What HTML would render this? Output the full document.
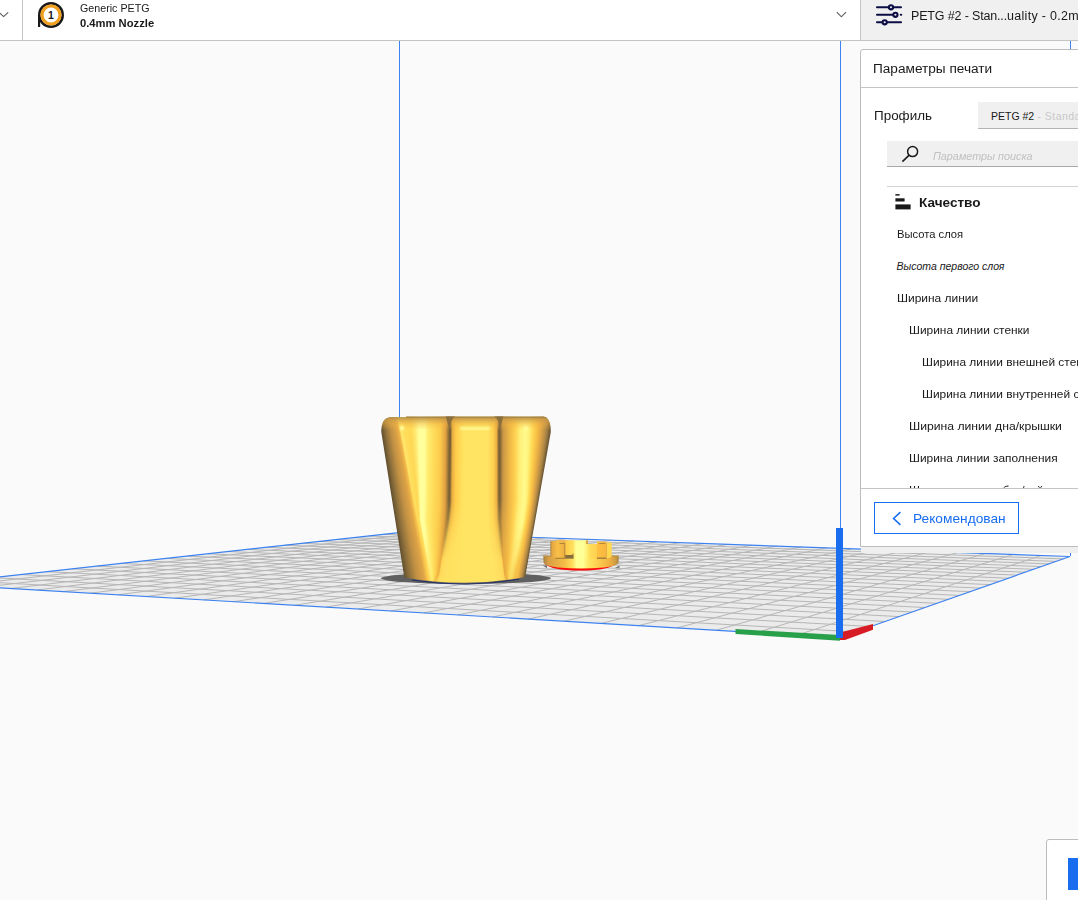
<!DOCTYPE html>
<html lang="ru"><head><meta charset="utf-8"><title>Cura</title>
<style>
html,body{margin:0;padding:0;}
body{width:1078px;height:900px;overflow:hidden;position:relative;background:#fafafa;font-family:"Liberation Sans",sans-serif;color:#191919;}
#scene{position:absolute;left:0;top:0;}
.abs{position:absolute;white-space:nowrap;line-height:1;}
#topbar{position:absolute;left:0;top:0;width:1078px;height:40px;background:#fff;border-bottom:1px solid #c4c4c4;}
#topright{position:absolute;left:861px;top:0;width:217px;height:40px;background:#f0f0f0;}
.vdiv{position:absolute;top:0;width:1px;height:40px;background:#c4c4c4;}
#panel{position:absolute;left:860px;top:49px;width:230px;height:498px;background:#fff;border:1px solid #bdbdbd;border-radius:3px 0 0 0;box-sizing:border-box;}
#strip{position:absolute;left:861px;top:547px;width:217px;height:6.4px;background:#efefef;}
.row{position:absolute;white-space:nowrap;line-height:1;font-size:10.5px;color:#191919;}
</style></head><body>

<svg id="scene" width="1078" height="900" viewBox="0 0 1078 900">
<rect x="0" y="0" width="1078" height="900" fill="#fafafa"/>
<polygon points="839.5,637.5 -65.0,584.0 399.0,532.6 1070.0,556.5" fill="#ebebeb"/>
<path d="M855.5 631.9L-35.4 580.7M870.7 626.5L-7.0 577.6M885.2 621.5L20.5 574.5M899.0 616.6L46.9 571.6M912.1 612.0L72.4 568.8M924.7 607.5L97.0 566.1M936.8 603.3L120.7 563.4M948.3 599.3L143.6 560.9M959.4 595.4L165.8 558.4M970.0 591.7L187.3 556.1M980.1 588.1L208.0 553.8M989.9 584.6L228.2 551.5M999.3 581.3L247.6 549.4M1008.3 578.2L266.5 547.3M1017.0 575.1L284.8 545.2M1025.4 572.2L302.6 543.3M1033.5 569.3L319.8 541.4M1041.3 566.6L336.6 539.5M1048.9 563.9L352.9 537.7M1056.2 561.4L368.7 536.0M1063.2 558.9L384.0 534.3M797.5 635.0L1041.4 555.5M756.5 632.6L1013.3 554.5M716.4 630.2L985.5 553.5M677.1 627.9L958.1 552.5M638.6 625.6L931.1 551.6M601.0 623.4L904.5 550.6M564.1 621.2L878.3 549.7M528.0 619.1L852.3 548.7M492.6 617.0L826.8 547.8M457.9 614.9L801.6 546.9M424.0 612.9L776.7 546.1M390.7 611.0L752.1 545.2M358.0 609.0L727.9 544.3M326.0 607.1L704.0 543.5M294.6 605.3L680.4 542.6M263.8 603.4L657.0 541.8M233.5 601.7L634.0 541.0M203.9 599.9L611.3 540.2M174.8 598.2L588.9 539.4M146.2 596.5L566.7 538.6M118.1 594.8L544.8 537.8M90.5 593.2L523.2 537.0M63.5 591.6L501.9 536.3M36.9 590.0L480.8 535.5M10.7 588.5L460.0 534.8M-15.0 587.0L439.4 534.0M-40.2 585.5L419.1 533.3" stroke="#b6b6b6" stroke-width="1" fill="none"/>
<polygon points="839.5,637.5 -65.0,584.0 399.0,532.6 1070.0,556.5" fill="none" stroke="#3c82f0" stroke-width="1.2"/>
<path d="M399.5 41V533M840.5 41V637M1070.5 41V556" stroke="#3c82f0" stroke-width="1" fill="none"/>
<defs><clipPath id="bodyclip"><path d="M381.3 432Q381.3 418 390 417.3L406 417.3L406 416.4L543.5 416.5Q550.8 417.5 550.8 432L525.2 577Q466 588.4 404.3 577.5Z"/></clipPath>
<linearGradient id="r0"><stop offset="0.0188" stop-color="#604e2e"/><stop offset="0.0394" stop-color="#8e703c"/><stop offset="0.0657" stop-color="#c09044"/><stop offset="0.0939" stop-color="#e0a444"/><stop offset="0.1053" stop-color="#f2b848"/><stop offset="0.1127" stop-color="#ffe66c"/><stop offset="0.1429" stop-color="#ffdc5a"/><stop offset="0.1786" stop-color="#ffd856"/><stop offset="0.2060" stop-color="#ffe870"/><stop offset="0.2307" stop-color="#ffff9c"/><stop offset="0.2499" stop-color="#ffff9c"/><stop offset="0.2658" stop-color="#ffff9c"/><stop offset="0.2849" stop-color="#ffec70"/><stop offset="0.3136" stop-color="#ffde5c"/><stop offset="0.3550" stop-color="#fcca4c"/><stop offset="0.3852" stop-color="#e0a040"/><stop offset="0.4057" stop-color="#7a6236"/><stop offset="0.4125" stop-color="#7a6236"/><stop offset="0.4233" stop-color="#e8ac40"/><stop offset="0.4432" stop-color="#ffcc4c"/><stop offset="0.4830" stop-color="#ffe260"/><stop offset="0.5000" stop-color="#ffe464"/><stop offset="0.6210" stop-color="#ffe464"/><stop offset="0.6551" stop-color="#ffd050"/><stop offset="0.6750" stop-color="#eaac42"/><stop offset="0.6858" stop-color="#7a6236"/><stop offset="0.6926" stop-color="#7a6236"/><stop offset="0.7100" stop-color="#c89644"/><stop offset="0.7517" stop-color="#f2ba46"/><stop offset="0.7814" stop-color="#ffd252"/><stop offset="0.8082" stop-color="#fff078"/><stop offset="0.8380" stop-color="#fffa8c"/><stop offset="0.8581" stop-color="#fff27a"/><stop offset="0.8811" stop-color="#ffd854"/><stop offset="0.9070" stop-color="#f6bc44"/><stop offset="0.9329" stop-color="#d8a046"/><stop offset="0.9588" stop-color="#a88444"/><stop offset="0.9818" stop-color="#665230"/></linearGradient>
<linearGradient id="r1"><stop offset="0.0188" stop-color="#604e2e"/><stop offset="0.0403" stop-color="#8e703c"/><stop offset="0.0677" stop-color="#c09044"/><stop offset="0.0970" stop-color="#e0a444"/><stop offset="0.1092" stop-color="#f2b848"/><stop offset="0.1166" stop-color="#ffe66c"/><stop offset="0.1459" stop-color="#ffdc5a"/><stop offset="0.1805" stop-color="#ffd856"/><stop offset="0.2072" stop-color="#ffe870"/><stop offset="0.2311" stop-color="#ffff9c"/><stop offset="0.2498" stop-color="#ffff9c"/><stop offset="0.2657" stop-color="#ffff9c"/><stop offset="0.2848" stop-color="#ffec70"/><stop offset="0.3135" stop-color="#ffde5c"/><stop offset="0.3549" stop-color="#fcca4c"/><stop offset="0.3852" stop-color="#e0a040"/><stop offset="0.4057" stop-color="#7a6236"/><stop offset="0.4125" stop-color="#7a6236"/><stop offset="0.4233" stop-color="#e8ac40"/><stop offset="0.4432" stop-color="#ffcc4c"/><stop offset="0.4830" stop-color="#ffe260"/><stop offset="0.5000" stop-color="#ffe464"/><stop offset="0.6210" stop-color="#ffe464"/><stop offset="0.6551" stop-color="#ffd050"/><stop offset="0.6750" stop-color="#eaac42"/><stop offset="0.6858" stop-color="#7a6236"/><stop offset="0.6926" stop-color="#7a6236"/><stop offset="0.7100" stop-color="#c89644"/><stop offset="0.7516" stop-color="#f2ba46"/><stop offset="0.7813" stop-color="#ffd252"/><stop offset="0.8081" stop-color="#fff078"/><stop offset="0.8378" stop-color="#fffa8c"/><stop offset="0.8580" stop-color="#fff27a"/><stop offset="0.8810" stop-color="#ffd854"/><stop offset="0.9069" stop-color="#f6bc44"/><stop offset="0.9329" stop-color="#d8a046"/><stop offset="0.9588" stop-color="#a88444"/><stop offset="0.9818" stop-color="#665230"/></linearGradient>
<linearGradient id="r2"><stop offset="0.0188" stop-color="#604e2e"/><stop offset="0.0411" stop-color="#8e703c"/><stop offset="0.0696" stop-color="#c09044"/><stop offset="0.1001" stop-color="#e0a444"/><stop offset="0.1131" stop-color="#f2b848"/><stop offset="0.1205" stop-color="#ffe66c"/><stop offset="0.1489" stop-color="#ffdc5a"/><stop offset="0.1825" stop-color="#ffd856"/><stop offset="0.2083" stop-color="#ffe870"/><stop offset="0.2316" stop-color="#ffff9c"/><stop offset="0.2496" stop-color="#ffff9c"/><stop offset="0.2656" stop-color="#ffff9c"/><stop offset="0.2847" stop-color="#ffec70"/><stop offset="0.3134" stop-color="#ffde5c"/><stop offset="0.3549" stop-color="#fcca4c"/><stop offset="0.3852" stop-color="#e0a040"/><stop offset="0.4057" stop-color="#7a6236"/><stop offset="0.4125" stop-color="#7a6236"/><stop offset="0.4233" stop-color="#e8ac40"/><stop offset="0.4432" stop-color="#ffcc4c"/><stop offset="0.4830" stop-color="#ffe260"/><stop offset="0.5000" stop-color="#ffe464"/><stop offset="0.6210" stop-color="#ffe464"/><stop offset="0.6551" stop-color="#ffd050"/><stop offset="0.6750" stop-color="#eaac42"/><stop offset="0.6858" stop-color="#7a6236"/><stop offset="0.6926" stop-color="#7a6236"/><stop offset="0.7100" stop-color="#c89644"/><stop offset="0.7515" stop-color="#f2ba46"/><stop offset="0.7812" stop-color="#ffd252"/><stop offset="0.8079" stop-color="#fff078"/><stop offset="0.8376" stop-color="#fffa8c"/><stop offset="0.8578" stop-color="#fff27a"/><stop offset="0.8809" stop-color="#ffd854"/><stop offset="0.9068" stop-color="#f6bc44"/><stop offset="0.9328" stop-color="#d8a046"/><stop offset="0.9587" stop-color="#a88444"/><stop offset="0.9818" stop-color="#665230"/></linearGradient>
<linearGradient id="r3"><stop offset="0.0188" stop-color="#604e2e"/><stop offset="0.0420" stop-color="#8e703c"/><stop offset="0.0716" stop-color="#c09044"/><stop offset="0.1032" stop-color="#e0a444"/><stop offset="0.1170" stop-color="#f2b848"/><stop offset="0.1244" stop-color="#ffe66c"/><stop offset="0.1519" stop-color="#ffdc5a"/><stop offset="0.1844" stop-color="#ffd856"/><stop offset="0.2095" stop-color="#ffe870"/><stop offset="0.2320" stop-color="#ffff9c"/><stop offset="0.2495" stop-color="#ffff9c"/><stop offset="0.2655" stop-color="#ffff9c"/><stop offset="0.2846" stop-color="#ffec70"/><stop offset="0.3133" stop-color="#ffde5c"/><stop offset="0.3548" stop-color="#fcca4c"/><stop offset="0.3852" stop-color="#e0a040"/><stop offset="0.4057" stop-color="#7a6236"/><stop offset="0.4125" stop-color="#7a6236"/><stop offset="0.4233" stop-color="#e8ac40"/><stop offset="0.4432" stop-color="#ffcc4c"/><stop offset="0.4830" stop-color="#ffe260"/><stop offset="0.5000" stop-color="#ffe464"/><stop offset="0.6210" stop-color="#ffe464"/><stop offset="0.6551" stop-color="#ffd050"/><stop offset="0.6750" stop-color="#eaac42"/><stop offset="0.6858" stop-color="#7a6236"/><stop offset="0.6926" stop-color="#7a6236"/><stop offset="0.7100" stop-color="#c89644"/><stop offset="0.7515" stop-color="#f2ba46"/><stop offset="0.7811" stop-color="#ffd252"/><stop offset="0.8078" stop-color="#fff078"/><stop offset="0.8374" stop-color="#fffa8c"/><stop offset="0.8576" stop-color="#fff27a"/><stop offset="0.8807" stop-color="#ffd854"/><stop offset="0.9067" stop-color="#f6bc44"/><stop offset="0.9327" stop-color="#d8a046"/><stop offset="0.9587" stop-color="#a88444"/><stop offset="0.9818" stop-color="#665230"/></linearGradient>
<linearGradient id="r4"><stop offset="0.0188" stop-color="#604e2e"/><stop offset="0.0427" stop-color="#8e703c"/><stop offset="0.0732" stop-color="#c09044"/><stop offset="0.1059" stop-color="#e0a444"/><stop offset="0.1203" stop-color="#f2b848"/><stop offset="0.1277" stop-color="#ffe66c"/><stop offset="0.1544" stop-color="#ffdc5a"/><stop offset="0.1861" stop-color="#ffd856"/><stop offset="0.2104" stop-color="#ffe870"/><stop offset="0.2323" stop-color="#ffff9c"/><stop offset="0.2494" stop-color="#ffff9c"/><stop offset="0.2653" stop-color="#ffff9c"/><stop offset="0.2845" stop-color="#ffec70"/><stop offset="0.3132" stop-color="#ffde5c"/><stop offset="0.3547" stop-color="#fcca4c"/><stop offset="0.3851" stop-color="#e0a040"/><stop offset="0.4056" stop-color="#7a6236"/><stop offset="0.4124" stop-color="#7a6236"/><stop offset="0.4232" stop-color="#e8ac40"/><stop offset="0.4431" stop-color="#ffcc4c"/><stop offset="0.4829" stop-color="#ffe260"/><stop offset="0.5000" stop-color="#ffe464"/><stop offset="0.6210" stop-color="#ffe464"/><stop offset="0.6551" stop-color="#ffd050"/><stop offset="0.6750" stop-color="#eaac42"/><stop offset="0.6858" stop-color="#7a6236"/><stop offset="0.6926" stop-color="#7a6236"/><stop offset="0.7099" stop-color="#c89644"/><stop offset="0.7514" stop-color="#f2ba46"/><stop offset="0.7810" stop-color="#ffd252"/><stop offset="0.8076" stop-color="#fff078"/><stop offset="0.8372" stop-color="#fffa8c"/><stop offset="0.8575" stop-color="#fff27a"/><stop offset="0.8806" stop-color="#ffd854"/><stop offset="0.9066" stop-color="#f6bc44"/><stop offset="0.9327" stop-color="#d8a046"/><stop offset="0.9587" stop-color="#a88444"/><stop offset="0.9818" stop-color="#665230"/></linearGradient>
<linearGradient id="r5"><stop offset="0.0201" stop-color="#604e2e"/><stop offset="0.0445" stop-color="#8e703c"/><stop offset="0.0755" stop-color="#c09044"/><stop offset="0.1087" stop-color="#e0a444"/><stop offset="0.1235" stop-color="#f2b848"/><stop offset="0.1309" stop-color="#ffe66c"/><stop offset="0.1569" stop-color="#ffdc5a"/><stop offset="0.1877" stop-color="#ffd856"/><stop offset="0.2114" stop-color="#ffe870"/><stop offset="0.2327" stop-color="#ffff9c"/><stop offset="0.2492" stop-color="#ffff9c"/><stop offset="0.2652" stop-color="#ffff9c"/><stop offset="0.2843" stop-color="#ffec70"/><stop offset="0.3131" stop-color="#ffde5c"/><stop offset="0.3546" stop-color="#fcca4c"/><stop offset="0.3849" stop-color="#e0a040"/><stop offset="0.4054" stop-color="#7a6236"/><stop offset="0.4123" stop-color="#7a6236"/><stop offset="0.4231" stop-color="#e8ac40"/><stop offset="0.4429" stop-color="#ffcc4c"/><stop offset="0.4827" stop-color="#ffe260"/><stop offset="0.5000" stop-color="#ffe464"/><stop offset="0.6211" stop-color="#ffe464"/><stop offset="0.6551" stop-color="#ffd050"/><stop offset="0.6750" stop-color="#eaac42"/><stop offset="0.6858" stop-color="#7a6236"/><stop offset="0.6926" stop-color="#7a6236"/><stop offset="0.7099" stop-color="#c89644"/><stop offset="0.7513" stop-color="#f2ba46"/><stop offset="0.7809" stop-color="#ffd252"/><stop offset="0.8075" stop-color="#fff078"/><stop offset="0.8371" stop-color="#fffa8c"/><stop offset="0.8571" stop-color="#fff27a"/><stop offset="0.8800" stop-color="#ffd854"/><stop offset="0.9058" stop-color="#f6bc44"/><stop offset="0.9316" stop-color="#d8a046"/><stop offset="0.9574" stop-color="#a88444"/><stop offset="0.9803" stop-color="#665230"/></linearGradient>
<linearGradient id="r6"><stop offset="0.0227" stop-color="#604e2e"/><stop offset="0.0472" stop-color="#8e703c"/><stop offset="0.0784" stop-color="#c09044"/><stop offset="0.1118" stop-color="#e0a444"/><stop offset="0.1267" stop-color="#f2b848"/><stop offset="0.1341" stop-color="#ffe66c"/><stop offset="0.1594" stop-color="#ffdc5a"/><stop offset="0.1893" stop-color="#ffd856"/><stop offset="0.2123" stop-color="#ffe870"/><stop offset="0.2330" stop-color="#ffff9c"/><stop offset="0.2491" stop-color="#ffff9c"/><stop offset="0.2650" stop-color="#ffff9c"/><stop offset="0.2842" stop-color="#ffec70"/><stop offset="0.3129" stop-color="#ffde5c"/><stop offset="0.3544" stop-color="#fcca4c"/><stop offset="0.3848" stop-color="#e0a040"/><stop offset="0.4053" stop-color="#7a6236"/><stop offset="0.4121" stop-color="#7a6236"/><stop offset="0.4229" stop-color="#e8ac40"/><stop offset="0.4428" stop-color="#ffcc4c"/><stop offset="0.4826" stop-color="#ffe260"/><stop offset="0.5000" stop-color="#ffe464"/><stop offset="0.6211" stop-color="#ffe464"/><stop offset="0.6552" stop-color="#ffd050"/><stop offset="0.6750" stop-color="#eaac42"/><stop offset="0.6858" stop-color="#7a6236"/><stop offset="0.6927" stop-color="#7a6236"/><stop offset="0.7099" stop-color="#c89644"/><stop offset="0.7513" stop-color="#f2ba46"/><stop offset="0.7808" stop-color="#ffd252"/><stop offset="0.8074" stop-color="#fff078"/><stop offset="0.8369" stop-color="#fffa8c"/><stop offset="0.8565" stop-color="#fff27a"/><stop offset="0.8790" stop-color="#ffd854"/><stop offset="0.9043" stop-color="#f6bc44"/><stop offset="0.9296" stop-color="#d8a046"/><stop offset="0.9548" stop-color="#a88444"/><stop offset="0.9773" stop-color="#665230"/></linearGradient>
<linearGradient id="r7"><stop offset="0.0254" stop-color="#604e2e"/><stop offset="0.0500" stop-color="#8e703c"/><stop offset="0.0813" stop-color="#c09044"/><stop offset="0.1149" stop-color="#e0a444"/><stop offset="0.1299" stop-color="#f2b848"/><stop offset="0.1373" stop-color="#ffe66c"/><stop offset="0.1619" stop-color="#ffdc5a"/><stop offset="0.1909" stop-color="#ffd856"/><stop offset="0.2132" stop-color="#ffe870"/><stop offset="0.2333" stop-color="#ffff9c"/><stop offset="0.2489" stop-color="#ffff9c"/><stop offset="0.2649" stop-color="#ffff9c"/><stop offset="0.2840" stop-color="#ffec70"/><stop offset="0.3128" stop-color="#ffde5c"/><stop offset="0.3543" stop-color="#fcca4c"/><stop offset="0.3846" stop-color="#e0a040"/><stop offset="0.4051" stop-color="#7a6236"/><stop offset="0.4120" stop-color="#7a6236"/><stop offset="0.4228" stop-color="#e8ac40"/><stop offset="0.4426" stop-color="#ffcc4c"/><stop offset="0.4824" stop-color="#ffe260"/><stop offset="0.5000" stop-color="#ffe464"/><stop offset="0.6211" stop-color="#ffe464"/><stop offset="0.6552" stop-color="#ffd050"/><stop offset="0.6751" stop-color="#eaac42"/><stop offset="0.6859" stop-color="#7a6236"/><stop offset="0.6927" stop-color="#7a6236"/><stop offset="0.7099" stop-color="#c89644"/><stop offset="0.7512" stop-color="#f2ba46"/><stop offset="0.7807" stop-color="#ffd252"/><stop offset="0.8072" stop-color="#fff078"/><stop offset="0.8367" stop-color="#fffa8c"/><stop offset="0.8560" stop-color="#fff27a"/><stop offset="0.8780" stop-color="#ffd854"/><stop offset="0.9028" stop-color="#f6bc44"/><stop offset="0.9275" stop-color="#d8a046"/><stop offset="0.9523" stop-color="#a88444"/><stop offset="0.9743" stop-color="#665230"/></linearGradient>
<linearGradient id="r8"><stop offset="0.0280" stop-color="#604e2e"/><stop offset="0.0528" stop-color="#8e703c"/><stop offset="0.0843" stop-color="#c09044"/><stop offset="0.1180" stop-color="#e0a444"/><stop offset="0.1331" stop-color="#f2b848"/><stop offset="0.1405" stop-color="#ffe66c"/><stop offset="0.1643" stop-color="#ffdc5a"/><stop offset="0.1925" stop-color="#ffd856"/><stop offset="0.2141" stop-color="#ffe870"/><stop offset="0.2336" stop-color="#ffff9c"/><stop offset="0.2488" stop-color="#ffff9c"/><stop offset="0.2648" stop-color="#ffff9c"/><stop offset="0.2839" stop-color="#ffec70"/><stop offset="0.3126" stop-color="#ffde5c"/><stop offset="0.3541" stop-color="#fcca4c"/><stop offset="0.3845" stop-color="#e0a040"/><stop offset="0.4050" stop-color="#7a6236"/><stop offset="0.4118" stop-color="#7a6236"/><stop offset="0.4226" stop-color="#e8ac40"/><stop offset="0.4425" stop-color="#ffcc4c"/><stop offset="0.4823" stop-color="#ffe260"/><stop offset="0.5000" stop-color="#ffe464"/><stop offset="0.6211" stop-color="#ffe464"/><stop offset="0.6552" stop-color="#ffd050"/><stop offset="0.6751" stop-color="#eaac42"/><stop offset="0.6859" stop-color="#7a6236"/><stop offset="0.6927" stop-color="#7a6236"/><stop offset="0.7099" stop-color="#c89644"/><stop offset="0.7511" stop-color="#f2ba46"/><stop offset="0.7806" stop-color="#ffd252"/><stop offset="0.8071" stop-color="#fff078"/><stop offset="0.8365" stop-color="#fffa8c"/><stop offset="0.8554" stop-color="#fff27a"/><stop offset="0.8770" stop-color="#ffd854"/><stop offset="0.9012" stop-color="#f6bc44"/><stop offset="0.9255" stop-color="#d8a046"/><stop offset="0.9497" stop-color="#a88444"/><stop offset="0.9713" stop-color="#665230"/></linearGradient>
<linearGradient id="r9"><stop offset="0.0307" stop-color="#604e2e"/><stop offset="0.0555" stop-color="#8e703c"/><stop offset="0.0872" stop-color="#c09044"/><stop offset="0.1211" stop-color="#e0a444"/><stop offset="0.1363" stop-color="#f2b848"/><stop offset="0.1437" stop-color="#ffe66c"/><stop offset="0.1668" stop-color="#ffdc5a"/><stop offset="0.1941" stop-color="#ffd856"/><stop offset="0.2151" stop-color="#ffe870"/><stop offset="0.2340" stop-color="#ffff9c"/><stop offset="0.2487" stop-color="#ffff9c"/><stop offset="0.2646" stop-color="#ffff9c"/><stop offset="0.2838" stop-color="#ffec70"/><stop offset="0.3125" stop-color="#ffde5c"/><stop offset="0.3540" stop-color="#fcca4c"/><stop offset="0.3843" stop-color="#e0a040"/><stop offset="0.4048" stop-color="#7a6236"/><stop offset="0.4116" stop-color="#7a6236"/><stop offset="0.4224" stop-color="#e8ac40"/><stop offset="0.4423" stop-color="#ffcc4c"/><stop offset="0.4821" stop-color="#ffe260"/><stop offset="0.5000" stop-color="#ffe464"/><stop offset="0.6211" stop-color="#ffe464"/><stop offset="0.6552" stop-color="#ffd050"/><stop offset="0.6751" stop-color="#eaac42"/><stop offset="0.6859" stop-color="#7a6236"/><stop offset="0.6927" stop-color="#7a6236"/><stop offset="0.7099" stop-color="#c89644"/><stop offset="0.7511" stop-color="#f2ba46"/><stop offset="0.7805" stop-color="#ffd252"/><stop offset="0.8069" stop-color="#fff078"/><stop offset="0.8363" stop-color="#fffa8c"/><stop offset="0.8548" stop-color="#fff27a"/><stop offset="0.8759" stop-color="#ffd854"/><stop offset="0.8997" stop-color="#f6bc44"/><stop offset="0.9234" stop-color="#d8a046"/><stop offset="0.9472" stop-color="#a88444"/><stop offset="0.9683" stop-color="#665230"/></linearGradient>
<linearGradient id="r10"><stop offset="0.0333" stop-color="#604e2e"/><stop offset="0.0583" stop-color="#8e703c"/><stop offset="0.0901" stop-color="#c09044"/><stop offset="0.1242" stop-color="#e0a444"/><stop offset="0.1395" stop-color="#f2b848"/><stop offset="0.1469" stop-color="#ffe66c"/><stop offset="0.1693" stop-color="#ffdc5a"/><stop offset="0.1957" stop-color="#ffd856"/><stop offset="0.2160" stop-color="#ffe870"/><stop offset="0.2343" stop-color="#ffff9c"/><stop offset="0.2485" stop-color="#ffff9c"/><stop offset="0.2645" stop-color="#ffff9c"/><stop offset="0.2836" stop-color="#ffec70"/><stop offset="0.3123" stop-color="#ffde5c"/><stop offset="0.3538" stop-color="#fcca4c"/><stop offset="0.3841" stop-color="#e0a040"/><stop offset="0.4047" stop-color="#7a6236"/><stop offset="0.4115" stop-color="#7a6236"/><stop offset="0.4223" stop-color="#e8ac40"/><stop offset="0.4422" stop-color="#ffcc4c"/><stop offset="0.4819" stop-color="#ffe260"/><stop offset="0.5000" stop-color="#ffe464"/><stop offset="0.6211" stop-color="#ffe464"/><stop offset="0.6552" stop-color="#ffd050"/><stop offset="0.6751" stop-color="#eaac42"/><stop offset="0.6859" stop-color="#7a6236"/><stop offset="0.6927" stop-color="#7a6236"/><stop offset="0.7099" stop-color="#c89644"/><stop offset="0.7510" stop-color="#f2ba46"/><stop offset="0.7804" stop-color="#ffd252"/><stop offset="0.8068" stop-color="#fff078"/><stop offset="0.8362" stop-color="#fffa8c"/><stop offset="0.8542" stop-color="#fff27a"/><stop offset="0.8749" stop-color="#ffd854"/><stop offset="0.8982" stop-color="#f6bc44"/><stop offset="0.9214" stop-color="#d8a046"/><stop offset="0.9447" stop-color="#a88444"/><stop offset="0.9653" stop-color="#665230"/></linearGradient>
<linearGradient id="r11"><stop offset="0.0360" stop-color="#604e2e"/><stop offset="0.0611" stop-color="#8e703c"/><stop offset="0.0930" stop-color="#c09044"/><stop offset="0.1273" stop-color="#e0a444"/><stop offset="0.1427" stop-color="#f2b848"/><stop offset="0.1501" stop-color="#ffe66c"/><stop offset="0.1717" stop-color="#ffdc5a"/><stop offset="0.1973" stop-color="#ffd856"/><stop offset="0.2169" stop-color="#ffe870"/><stop offset="0.2346" stop-color="#ffff9c"/><stop offset="0.2484" stop-color="#ffff9c"/><stop offset="0.2643" stop-color="#ffff9c"/><stop offset="0.2835" stop-color="#ffec70"/><stop offset="0.3122" stop-color="#ffde5c"/><stop offset="0.3537" stop-color="#fcca4c"/><stop offset="0.3840" stop-color="#e0a040"/><stop offset="0.4045" stop-color="#7a6236"/><stop offset="0.4113" stop-color="#7a6236"/><stop offset="0.4221" stop-color="#e8ac40"/><stop offset="0.4420" stop-color="#ffcc4c"/><stop offset="0.4818" stop-color="#ffe260"/><stop offset="0.5000" stop-color="#ffe464"/><stop offset="0.6212" stop-color="#ffe464"/><stop offset="0.6553" stop-color="#ffd050"/><stop offset="0.6751" stop-color="#eaac42"/><stop offset="0.6859" stop-color="#7a6236"/><stop offset="0.6928" stop-color="#7a6236"/><stop offset="0.7099" stop-color="#c89644"/><stop offset="0.7509" stop-color="#f2ba46"/><stop offset="0.7803" stop-color="#ffd252"/><stop offset="0.8066" stop-color="#fff078"/><stop offset="0.8360" stop-color="#fffa8c"/><stop offset="0.8537" stop-color="#fff27a"/><stop offset="0.8739" stop-color="#ffd854"/><stop offset="0.8966" stop-color="#f6bc44"/><stop offset="0.9194" stop-color="#d8a046"/><stop offset="0.9421" stop-color="#a88444"/><stop offset="0.9623" stop-color="#665230"/></linearGradient>
<linearGradient id="r12"><stop offset="0.0386" stop-color="#604e2e"/><stop offset="0.0638" stop-color="#8e703c"/><stop offset="0.0960" stop-color="#c09044"/><stop offset="0.1304" stop-color="#e0a444"/><stop offset="0.1459" stop-color="#f2b848"/><stop offset="0.1533" stop-color="#ffe66c"/><stop offset="0.1742" stop-color="#ffdc5a"/><stop offset="0.1989" stop-color="#ffd856"/><stop offset="0.2179" stop-color="#ffe870"/><stop offset="0.2349" stop-color="#ffff9c"/><stop offset="0.2482" stop-color="#ffff9c"/><stop offset="0.2642" stop-color="#ffff9c"/><stop offset="0.2833" stop-color="#ffec70"/><stop offset="0.3120" stop-color="#ffde5c"/><stop offset="0.3535" stop-color="#fcca4c"/><stop offset="0.3838" stop-color="#e0a040"/><stop offset="0.4044" stop-color="#7a6236"/><stop offset="0.4112" stop-color="#7a6236"/><stop offset="0.4220" stop-color="#e8ac40"/><stop offset="0.4419" stop-color="#ffcc4c"/><stop offset="0.4816" stop-color="#ffe260"/><stop offset="0.5000" stop-color="#ffe464"/><stop offset="0.6212" stop-color="#ffe464"/><stop offset="0.6553" stop-color="#ffd050"/><stop offset="0.6752" stop-color="#eaac42"/><stop offset="0.6860" stop-color="#7a6236"/><stop offset="0.6928" stop-color="#7a6236"/><stop offset="0.7099" stop-color="#c89644"/><stop offset="0.7509" stop-color="#f2ba46"/><stop offset="0.7801" stop-color="#ffd252"/><stop offset="0.8065" stop-color="#fff078"/><stop offset="0.8358" stop-color="#fffa8c"/><stop offset="0.8531" stop-color="#fff27a"/><stop offset="0.8728" stop-color="#ffd854"/><stop offset="0.8951" stop-color="#f6bc44"/><stop offset="0.9173" stop-color="#d8a046"/><stop offset="0.9396" stop-color="#a88444"/><stop offset="0.9593" stop-color="#665230"/></linearGradient>
<linearGradient id="r13"><stop offset="0.0413" stop-color="#604e2e"/><stop offset="0.0666" stop-color="#8e703c"/><stop offset="0.0989" stop-color="#c09044"/><stop offset="0.1335" stop-color="#e0a444"/><stop offset="0.1492" stop-color="#f2b848"/><stop offset="0.1565" stop-color="#ffe66c"/><stop offset="0.1767" stop-color="#ffdc5a"/><stop offset="0.2005" stop-color="#ffd856"/><stop offset="0.2188" stop-color="#ffe870"/><stop offset="0.2353" stop-color="#ffff9c"/><stop offset="0.2481" stop-color="#ffff9c"/><stop offset="0.2640" stop-color="#ffff9c"/><stop offset="0.2832" stop-color="#ffec70"/><stop offset="0.3119" stop-color="#ffde5c"/><stop offset="0.3534" stop-color="#fcca4c"/><stop offset="0.3837" stop-color="#e0a040"/><stop offset="0.4042" stop-color="#7a6236"/><stop offset="0.4110" stop-color="#7a6236"/><stop offset="0.4218" stop-color="#e8ac40"/><stop offset="0.4417" stop-color="#ffcc4c"/><stop offset="0.4815" stop-color="#ffe260"/><stop offset="0.5000" stop-color="#ffe464"/><stop offset="0.6212" stop-color="#ffe464"/><stop offset="0.6553" stop-color="#ffd050"/><stop offset="0.6752" stop-color="#eaac42"/><stop offset="0.6860" stop-color="#7a6236"/><stop offset="0.6928" stop-color="#7a6236"/><stop offset="0.7099" stop-color="#c89644"/><stop offset="0.7508" stop-color="#f2ba46"/><stop offset="0.7800" stop-color="#ffd252"/><stop offset="0.8064" stop-color="#fff078"/><stop offset="0.8356" stop-color="#fffa8c"/><stop offset="0.8525" stop-color="#fff27a"/><stop offset="0.8718" stop-color="#ffd854"/><stop offset="0.8935" stop-color="#f6bc44"/><stop offset="0.9153" stop-color="#d8a046"/><stop offset="0.9370" stop-color="#a88444"/><stop offset="0.9563" stop-color="#665230"/></linearGradient>
<linearGradient id="r14"><stop offset="0.0439" stop-color="#604e2e"/><stop offset="0.0694" stop-color="#8e703c"/><stop offset="0.1018" stop-color="#c09044"/><stop offset="0.1366" stop-color="#e0a444"/><stop offset="0.1524" stop-color="#f2b948"/><stop offset="0.1597" stop-color="#ffe56b"/><stop offset="0.1792" stop-color="#ffdc5a"/><stop offset="0.2021" stop-color="#ffd856"/><stop offset="0.2197" stop-color="#ffe870"/><stop offset="0.2356" stop-color="#ffff9c"/><stop offset="0.2479" stop-color="#ffff9c"/><stop offset="0.2639" stop-color="#ffff9c"/><stop offset="0.2830" stop-color="#ffec70"/><stop offset="0.3117" stop-color="#ffde5c"/><stop offset="0.3532" stop-color="#fcca4c"/><stop offset="0.3835" stop-color="#e0a040"/><stop offset="0.4041" stop-color="#7a6236"/><stop offset="0.4109" stop-color="#7a6236"/><stop offset="0.4217" stop-color="#e8ac40"/><stop offset="0.4416" stop-color="#ffcc4c"/><stop offset="0.4813" stop-color="#ffe260"/><stop offset="0.5000" stop-color="#ffe464"/><stop offset="0.6212" stop-color="#ffe464"/><stop offset="0.6553" stop-color="#ffd050"/><stop offset="0.6752" stop-color="#eaac42"/><stop offset="0.6860" stop-color="#7a6236"/><stop offset="0.6928" stop-color="#7a6236"/><stop offset="0.7098" stop-color="#c89644"/><stop offset="0.7507" stop-color="#f2ba46"/><stop offset="0.7799" stop-color="#ffd252"/><stop offset="0.8062" stop-color="#fff078"/><stop offset="0.8354" stop-color="#fffa8c"/><stop offset="0.8519" stop-color="#fff27a"/><stop offset="0.8708" stop-color="#ffd854"/><stop offset="0.8920" stop-color="#f6bc44"/><stop offset="0.9132" stop-color="#d8a046"/><stop offset="0.9345" stop-color="#a88444"/><stop offset="0.9533" stop-color="#665230"/></linearGradient>
<linearGradient id="r15"><stop offset="0.0465" stop-color="#604e2e"/><stop offset="0.0722" stop-color="#8e703c"/><stop offset="0.1048" stop-color="#c09044"/><stop offset="0.1397" stop-color="#e0a444"/><stop offset="0.1556" stop-color="#f3b948"/><stop offset="0.1630" stop-color="#ffe56a"/><stop offset="0.1816" stop-color="#ffdc5a"/><stop offset="0.2037" stop-color="#ffd856"/><stop offset="0.2206" stop-color="#ffe870"/><stop offset="0.2359" stop-color="#ffff9c"/><stop offset="0.2478" stop-color="#ffff9c"/><stop offset="0.2637" stop-color="#ffff9c"/><stop offset="0.2829" stop-color="#ffec70"/><stop offset="0.3116" stop-color="#ffde5c"/><stop offset="0.3531" stop-color="#fcca4c"/><stop offset="0.3834" stop-color="#e0a040"/><stop offset="0.4039" stop-color="#7a6236"/><stop offset="0.4107" stop-color="#7a6236"/><stop offset="0.4215" stop-color="#e8ac40"/><stop offset="0.4414" stop-color="#ffcc4c"/><stop offset="0.4812" stop-color="#ffe260"/><stop offset="0.5000" stop-color="#ffe464"/><stop offset="0.6212" stop-color="#ffe464"/><stop offset="0.6553" stop-color="#ffd050"/><stop offset="0.6752" stop-color="#eaac42"/><stop offset="0.6860" stop-color="#7a6236"/><stop offset="0.6928" stop-color="#7a6236"/><stop offset="0.7098" stop-color="#c89644"/><stop offset="0.7507" stop-color="#f2ba46"/><stop offset="0.7798" stop-color="#ffd252"/><stop offset="0.8061" stop-color="#fff078"/><stop offset="0.8352" stop-color="#fffa8c"/><stop offset="0.8513" stop-color="#fff27a"/><stop offset="0.8698" stop-color="#ffd854"/><stop offset="0.8905" stop-color="#f6bc44"/><stop offset="0.9112" stop-color="#d8a046"/><stop offset="0.9319" stop-color="#a88444"/><stop offset="0.9503" stop-color="#665230"/></linearGradient>
<linearGradient id="r16"><stop offset="0.0492" stop-color="#604e2e"/><stop offset="0.0749" stop-color="#8e703c"/><stop offset="0.1077" stop-color="#c09044"/><stop offset="0.1428" stop-color="#e0a444"/><stop offset="0.1588" stop-color="#f3ba49"/><stop offset="0.1662" stop-color="#ffe46a"/><stop offset="0.1841" stop-color="#ffdc5a"/><stop offset="0.2053" stop-color="#ffd856"/><stop offset="0.2216" stop-color="#ffe870"/><stop offset="0.2362" stop-color="#ffff9c"/><stop offset="0.2477" stop-color="#ffff9c"/><stop offset="0.2636" stop-color="#ffff9c"/><stop offset="0.2827" stop-color="#ffec70"/><stop offset="0.3115" stop-color="#ffde5c"/><stop offset="0.3529" stop-color="#fcca4c"/><stop offset="0.3832" stop-color="#e0a040"/><stop offset="0.4037" stop-color="#7a6236"/><stop offset="0.4106" stop-color="#7a6236"/><stop offset="0.4214" stop-color="#e8ac40"/><stop offset="0.4412" stop-color="#ffcc4c"/><stop offset="0.4810" stop-color="#ffe260"/><stop offset="0.5000" stop-color="#ffe464"/><stop offset="0.6213" stop-color="#ffe464"/><stop offset="0.6553" stop-color="#ffd050"/><stop offset="0.6752" stop-color="#eaac42"/><stop offset="0.6860" stop-color="#7a6236"/><stop offset="0.6928" stop-color="#7a6236"/><stop offset="0.7098" stop-color="#c89644"/><stop offset="0.7506" stop-color="#f2ba46"/><stop offset="0.7797" stop-color="#ffd252"/><stop offset="0.8059" stop-color="#fff078"/><stop offset="0.8351" stop-color="#fffa8c"/><stop offset="0.8508" stop-color="#fff27a"/><stop offset="0.8687" stop-color="#ffd854"/><stop offset="0.8889" stop-color="#f6bc44"/><stop offset="0.9091" stop-color="#d8a046"/><stop offset="0.9294" stop-color="#a88444"/><stop offset="0.9473" stop-color="#665230"/></linearGradient>
<linearGradient id="r17"><stop offset="0.0518" stop-color="#604e2e"/><stop offset="0.0777" stop-color="#8e703c"/><stop offset="0.1106" stop-color="#c09044"/><stop offset="0.1459" stop-color="#e0a444"/><stop offset="0.1620" stop-color="#f3ba49"/><stop offset="0.1694" stop-color="#ffe469"/><stop offset="0.1866" stop-color="#ffdc5a"/><stop offset="0.2069" stop-color="#ffd856"/><stop offset="0.2225" stop-color="#ffe870"/><stop offset="0.2366" stop-color="#ffff9c"/><stop offset="0.2475" stop-color="#ffff9c"/><stop offset="0.2635" stop-color="#ffff9c"/><stop offset="0.2826" stop-color="#ffec70"/><stop offset="0.3113" stop-color="#ffde5c"/><stop offset="0.3528" stop-color="#fcca4c"/><stop offset="0.3831" stop-color="#e0a040"/><stop offset="0.4036" stop-color="#7a6236"/><stop offset="0.4104" stop-color="#7a6236"/><stop offset="0.4212" stop-color="#e8ac40"/><stop offset="0.4411" stop-color="#ffcc4c"/><stop offset="0.4809" stop-color="#ffe260"/><stop offset="0.5000" stop-color="#ffe464"/><stop offset="0.6213" stop-color="#ffe464"/><stop offset="0.6554" stop-color="#ffd050"/><stop offset="0.6753" stop-color="#eaac42"/><stop offset="0.6860" stop-color="#7a6236"/><stop offset="0.6929" stop-color="#7a6236"/><stop offset="0.7098" stop-color="#c89644"/><stop offset="0.7505" stop-color="#f2ba46"/><stop offset="0.7796" stop-color="#ffd252"/><stop offset="0.8058" stop-color="#fff078"/><stop offset="0.8349" stop-color="#fffa8c"/><stop offset="0.8502" stop-color="#fff27a"/><stop offset="0.8677" stop-color="#ffd854"/><stop offset="0.8874" stop-color="#f6bc44"/><stop offset="0.9071" stop-color="#d8a046"/><stop offset="0.9268" stop-color="#a88444"/><stop offset="0.9443" stop-color="#665230"/></linearGradient>
<linearGradient id="r18"><stop offset="0.0545" stop-color="#604e2e"/><stop offset="0.0805" stop-color="#8e703c"/><stop offset="0.1135" stop-color="#c09044"/><stop offset="0.1490" stop-color="#e0a444"/><stop offset="0.1652" stop-color="#f4bb49"/><stop offset="0.1726" stop-color="#ffe469"/><stop offset="0.1890" stop-color="#ffdc5a"/><stop offset="0.2085" stop-color="#ffd856"/><stop offset="0.2234" stop-color="#ffe870"/><stop offset="0.2369" stop-color="#ffff9c"/><stop offset="0.2474" stop-color="#ffff9c"/><stop offset="0.2633" stop-color="#ffff9c"/><stop offset="0.2825" stop-color="#ffec70"/><stop offset="0.3112" stop-color="#ffde5c"/><stop offset="0.3526" stop-color="#fcca4c"/><stop offset="0.3829" stop-color="#e0a040"/><stop offset="0.4034" stop-color="#7a6236"/><stop offset="0.4103" stop-color="#7a6236"/><stop offset="0.4210" stop-color="#e8ac40"/><stop offset="0.4409" stop-color="#ffcc4c"/><stop offset="0.4807" stop-color="#ffe260"/><stop offset="0.5000" stop-color="#ffe464"/><stop offset="0.6213" stop-color="#ffe464"/><stop offset="0.6554" stop-color="#ffd050"/><stop offset="0.6753" stop-color="#eaac42"/><stop offset="0.6861" stop-color="#7a6236"/><stop offset="0.6929" stop-color="#7a6236"/><stop offset="0.7098" stop-color="#c89644"/><stop offset="0.7505" stop-color="#f2ba46"/><stop offset="0.7795" stop-color="#ffd252"/><stop offset="0.8056" stop-color="#fff078"/><stop offset="0.8347" stop-color="#fffa8c"/><stop offset="0.8496" stop-color="#fff27a"/><stop offset="0.8667" stop-color="#ffd854"/><stop offset="0.8859" stop-color="#f6bc44"/><stop offset="0.9051" stop-color="#d8a046"/><stop offset="0.9243" stop-color="#a88444"/><stop offset="0.9413" stop-color="#665230"/></linearGradient>
<linearGradient id="r19"><stop offset="0.0571" stop-color="#604e2e"/><stop offset="0.0832" stop-color="#8e703c"/><stop offset="0.1165" stop-color="#c09044"/><stop offset="0.1521" stop-color="#e0a444"/><stop offset="0.1684" stop-color="#f4bc49"/><stop offset="0.1758" stop-color="#ffe368"/><stop offset="0.1915" stop-color="#ffdc5a"/><stop offset="0.2101" stop-color="#ffd856"/><stop offset="0.2244" stop-color="#ffe870"/><stop offset="0.2372" stop-color="#ffff9c"/><stop offset="0.2472" stop-color="#ffff9c"/><stop offset="0.2632" stop-color="#ffff9c"/><stop offset="0.2823" stop-color="#ffec70"/><stop offset="0.3110" stop-color="#ffde5c"/><stop offset="0.3525" stop-color="#fcca4c"/><stop offset="0.3828" stop-color="#e0a040"/><stop offset="0.4033" stop-color="#7a6236"/><stop offset="0.4101" stop-color="#7a6236"/><stop offset="0.4209" stop-color="#e8ac40"/><stop offset="0.4408" stop-color="#ffcc4c"/><stop offset="0.4806" stop-color="#ffe260"/><stop offset="0.5000" stop-color="#ffe464"/><stop offset="0.6213" stop-color="#ffe464"/><stop offset="0.6554" stop-color="#ffd050"/><stop offset="0.6753" stop-color="#eaac42"/><stop offset="0.6861" stop-color="#7a6236"/><stop offset="0.6929" stop-color="#7a6236"/><stop offset="0.7098" stop-color="#c89644"/><stop offset="0.7504" stop-color="#f2ba46"/><stop offset="0.7794" stop-color="#ffd252"/><stop offset="0.8055" stop-color="#fff078"/><stop offset="0.8345" stop-color="#fffa8c"/><stop offset="0.8490" stop-color="#fff27a"/><stop offset="0.8657" stop-color="#ffd854"/><stop offset="0.8843" stop-color="#f6bc44"/><stop offset="0.9030" stop-color="#d8a046"/><stop offset="0.9217" stop-color="#a88444"/><stop offset="0.9383" stop-color="#665230"/></linearGradient>
<linearGradient id="r20"><stop offset="0.0598" stop-color="#604e2e"/><stop offset="0.0860" stop-color="#8e703c"/><stop offset="0.1194" stop-color="#c09044"/><stop offset="0.1552" stop-color="#e0a444"/><stop offset="0.1716" stop-color="#f4bc49"/><stop offset="0.1790" stop-color="#ffe368"/><stop offset="0.1940" stop-color="#ffdc5a"/><stop offset="0.2117" stop-color="#ffd856"/><stop offset="0.2253" stop-color="#ffe870"/><stop offset="0.2376" stop-color="#ffff9c"/><stop offset="0.2471" stop-color="#ffff9c"/><stop offset="0.2630" stop-color="#ffff9c"/><stop offset="0.2822" stop-color="#ffec70"/><stop offset="0.3109" stop-color="#ffde5c"/><stop offset="0.3523" stop-color="#fcca4c"/><stop offset="0.3826" stop-color="#e0a040"/><stop offset="0.4031" stop-color="#7a6236"/><stop offset="0.4099" stop-color="#7a6236"/><stop offset="0.4207" stop-color="#e8ac40"/><stop offset="0.4406" stop-color="#ffcc4c"/><stop offset="0.4804" stop-color="#ffe260"/><stop offset="0.5000" stop-color="#ffe464"/><stop offset="0.6213" stop-color="#ffe464"/><stop offset="0.6554" stop-color="#ffd050"/><stop offset="0.6753" stop-color="#eaac42"/><stop offset="0.6861" stop-color="#7a6236"/><stop offset="0.6929" stop-color="#7a6236"/><stop offset="0.7098" stop-color="#c89644"/><stop offset="0.7503" stop-color="#f2ba46"/><stop offset="0.7793" stop-color="#ffd252"/><stop offset="0.8054" stop-color="#fff078"/><stop offset="0.8343" stop-color="#fffa8c"/><stop offset="0.8485" stop-color="#fff27a"/><stop offset="0.8646" stop-color="#ffd854"/><stop offset="0.8828" stop-color="#f6bc44"/><stop offset="0.9010" stop-color="#d8a046"/><stop offset="0.9192" stop-color="#a88444"/><stop offset="0.9353" stop-color="#665230"/></linearGradient>
<linearGradient id="r21"><stop offset="0.0624" stop-color="#604e2e"/><stop offset="0.0888" stop-color="#8e703c"/><stop offset="0.1223" stop-color="#c09044"/><stop offset="0.1582" stop-color="#e0a444"/><stop offset="0.1748" stop-color="#f4bd49"/><stop offset="0.1822" stop-color="#ffe267"/><stop offset="0.1964" stop-color="#ffdc5a"/><stop offset="0.2133" stop-color="#ffd856"/><stop offset="0.2262" stop-color="#ffe870"/><stop offset="0.2379" stop-color="#ffff9c"/><stop offset="0.2469" stop-color="#ffff9c"/><stop offset="0.2629" stop-color="#ffff9c"/><stop offset="0.2820" stop-color="#ffec70"/><stop offset="0.3107" stop-color="#ffde5c"/><stop offset="0.3522" stop-color="#fcca4c"/><stop offset="0.3825" stop-color="#e0a040"/><stop offset="0.4030" stop-color="#7a6236"/><stop offset="0.4098" stop-color="#7a6236"/><stop offset="0.4206" stop-color="#e8ac40"/><stop offset="0.4405" stop-color="#ffcc4c"/><stop offset="0.4802" stop-color="#ffe260"/><stop offset="0.5000" stop-color="#ffe464"/><stop offset="0.6213" stop-color="#ffe464"/><stop offset="0.6554" stop-color="#ffd050"/><stop offset="0.6753" stop-color="#eaac42"/><stop offset="0.6861" stop-color="#7a6236"/><stop offset="0.6929" stop-color="#7a6236"/><stop offset="0.7098" stop-color="#c89644"/><stop offset="0.7503" stop-color="#f2ba46"/><stop offset="0.7792" stop-color="#ffd252"/><stop offset="0.8052" stop-color="#fff078"/><stop offset="0.8341" stop-color="#fffa8c"/><stop offset="0.8479" stop-color="#fff27a"/><stop offset="0.8636" stop-color="#ffd854"/><stop offset="0.8813" stop-color="#f6bc44"/><stop offset="0.8989" stop-color="#d8a046"/><stop offset="0.9166" stop-color="#a88444"/><stop offset="0.9323" stop-color="#665230"/></linearGradient>
<linearGradient id="r22"><stop offset="0.0651" stop-color="#604e2e"/><stop offset="0.0915" stop-color="#8e703c"/><stop offset="0.1252" stop-color="#c09044"/><stop offset="0.1613" stop-color="#e0a444"/><stop offset="0.1780" stop-color="#f5bd4a"/><stop offset="0.1854" stop-color="#ffe266"/><stop offset="0.1989" stop-color="#ffdc5a"/><stop offset="0.2149" stop-color="#ffd856"/><stop offset="0.2272" stop-color="#ffe870"/><stop offset="0.2382" stop-color="#ffff9c"/><stop offset="0.2468" stop-color="#ffff9c"/><stop offset="0.2627" stop-color="#ffff9c"/><stop offset="0.2819" stop-color="#ffec70"/><stop offset="0.3106" stop-color="#ffde5c"/><stop offset="0.3520" stop-color="#fcca4c"/><stop offset="0.3823" stop-color="#e0a040"/><stop offset="0.4028" stop-color="#7a6236"/><stop offset="0.4096" stop-color="#7a6236"/><stop offset="0.4204" stop-color="#e8ac40"/><stop offset="0.4403" stop-color="#ffcc4c"/><stop offset="0.4801" stop-color="#ffe260"/><stop offset="0.5000" stop-color="#ffe464"/><stop offset="0.6214" stop-color="#ffe464"/><stop offset="0.6555" stop-color="#ffd050"/><stop offset="0.6753" stop-color="#eaac42"/><stop offset="0.6861" stop-color="#7a6236"/><stop offset="0.6930" stop-color="#7a6236"/><stop offset="0.7098" stop-color="#c89644"/><stop offset="0.7502" stop-color="#f2ba46"/><stop offset="0.7791" stop-color="#ffd252"/><stop offset="0.8051" stop-color="#fff078"/><stop offset="0.8340" stop-color="#fffa8c"/><stop offset="0.8473" stop-color="#fff27a"/><stop offset="0.8626" stop-color="#ffd854"/><stop offset="0.8797" stop-color="#f6bc44"/><stop offset="0.8969" stop-color="#d8a046"/><stop offset="0.9141" stop-color="#a88444"/><stop offset="0.9293" stop-color="#665230"/></linearGradient>
<linearGradient id="r23"><stop offset="0.0677" stop-color="#604e2e"/><stop offset="0.0943" stop-color="#8e703c"/><stop offset="0.1282" stop-color="#c09044"/><stop offset="0.1644" stop-color="#e0a444"/><stop offset="0.1812" stop-color="#f5be4a"/><stop offset="0.1886" stop-color="#ffe166"/><stop offset="0.2014" stop-color="#ffdc5a"/><stop offset="0.2165" stop-color="#ffd856"/><stop offset="0.2281" stop-color="#ffe870"/><stop offset="0.2385" stop-color="#ffff9c"/><stop offset="0.2467" stop-color="#ffff9c"/><stop offset="0.2626" stop-color="#ffff9c"/><stop offset="0.2817" stop-color="#ffec70"/><stop offset="0.3104" stop-color="#ffde5c"/><stop offset="0.3519" stop-color="#fcca4c"/><stop offset="0.3822" stop-color="#e0a040"/><stop offset="0.4027" stop-color="#7a6236"/><stop offset="0.4095" stop-color="#7a6236"/><stop offset="0.4203" stop-color="#e8ac40"/><stop offset="0.4402" stop-color="#ffcc4c"/><stop offset="0.4799" stop-color="#ffe260"/><stop offset="0.5000" stop-color="#ffe464"/><stop offset="0.6214" stop-color="#ffe464"/><stop offset="0.6555" stop-color="#ffd050"/><stop offset="0.6754" stop-color="#eaac42"/><stop offset="0.6862" stop-color="#7a6236"/><stop offset="0.6930" stop-color="#7a6236"/><stop offset="0.7098" stop-color="#c89644"/><stop offset="0.7501" stop-color="#f2ba46"/><stop offset="0.7790" stop-color="#ffd252"/><stop offset="0.8049" stop-color="#fff078"/><stop offset="0.8338" stop-color="#fffa8c"/><stop offset="0.8467" stop-color="#fff27a"/><stop offset="0.8615" stop-color="#ffd854"/><stop offset="0.8782" stop-color="#f6bc44"/><stop offset="0.8949" stop-color="#d8a046"/><stop offset="0.9115" stop-color="#a88444"/><stop offset="0.9263" stop-color="#665230"/></linearGradient>
<linearGradient id="r24"><stop offset="0.0704" stop-color="#604e2e"/><stop offset="0.0971" stop-color="#8e703c"/><stop offset="0.1311" stop-color="#c09044"/><stop offset="0.1675" stop-color="#e0a444"/><stop offset="0.1844" stop-color="#f5be4a"/><stop offset="0.1918" stop-color="#ffe165"/><stop offset="0.2039" stop-color="#ffdc5a"/><stop offset="0.2181" stop-color="#ffd856"/><stop offset="0.2290" stop-color="#ffe870"/><stop offset="0.2389" stop-color="#ffff9c"/><stop offset="0.2465" stop-color="#ffff9c"/><stop offset="0.2625" stop-color="#ffff9c"/><stop offset="0.2816" stop-color="#ffec70"/><stop offset="0.3103" stop-color="#ffde5c"/><stop offset="0.3517" stop-color="#fcca4c"/><stop offset="0.3820" stop-color="#e0a040"/><stop offset="0.4025" stop-color="#7a6236"/><stop offset="0.4093" stop-color="#7a6236"/><stop offset="0.4201" stop-color="#e8ac40"/><stop offset="0.4400" stop-color="#ffcc4c"/><stop offset="0.4798" stop-color="#ffe260"/><stop offset="0.5000" stop-color="#ffe464"/><stop offset="0.6214" stop-color="#ffe464"/><stop offset="0.6555" stop-color="#ffd050"/><stop offset="0.6754" stop-color="#eaac42"/><stop offset="0.6862" stop-color="#7a6236"/><stop offset="0.6930" stop-color="#7a6236"/><stop offset="0.7097" stop-color="#c89644"/><stop offset="0.7501" stop-color="#f2ba46"/><stop offset="0.7789" stop-color="#ffd252"/><stop offset="0.8048" stop-color="#fff078"/><stop offset="0.8336" stop-color="#fffa8c"/><stop offset="0.8462" stop-color="#fff27a"/><stop offset="0.8605" stop-color="#ffd854"/><stop offset="0.8767" stop-color="#f6bc44"/><stop offset="0.8928" stop-color="#d8a046"/><stop offset="0.9090" stop-color="#a88444"/><stop offset="0.9233" stop-color="#665230"/></linearGradient>
<linearGradient id="r25"><stop offset="0.0730" stop-color="#604e2e"/><stop offset="0.0999" stop-color="#8e703c"/><stop offset="0.1340" stop-color="#c09044"/><stop offset="0.1706" stop-color="#e0a444"/><stop offset="0.1876" stop-color="#f5bf4a"/><stop offset="0.1950" stop-color="#ffe164"/><stop offset="0.2063" stop-color="#ffdc5a"/><stop offset="0.2197" stop-color="#ffd856"/><stop offset="0.2299" stop-color="#ffe870"/><stop offset="0.2392" stop-color="#ffff9c"/><stop offset="0.2464" stop-color="#ffff9c"/><stop offset="0.2623" stop-color="#ffff9c"/><stop offset="0.2814" stop-color="#ffec70"/><stop offset="0.3101" stop-color="#ffde5c"/><stop offset="0.3516" stop-color="#fcca4c"/><stop offset="0.3819" stop-color="#e0a040"/><stop offset="0.4024" stop-color="#7a6236"/><stop offset="0.4092" stop-color="#7a6236"/><stop offset="0.4200" stop-color="#e8ac40"/><stop offset="0.4399" stop-color="#ffcc4c"/><stop offset="0.4796" stop-color="#ffe260"/><stop offset="0.5000" stop-color="#ffe464"/><stop offset="0.6214" stop-color="#ffe464"/><stop offset="0.6555" stop-color="#ffd050"/><stop offset="0.6754" stop-color="#eaac42"/><stop offset="0.6862" stop-color="#7a6236"/><stop offset="0.6930" stop-color="#7a6236"/><stop offset="0.7097" stop-color="#c89644"/><stop offset="0.7500" stop-color="#f2ba46"/><stop offset="0.7788" stop-color="#ffd252"/><stop offset="0.8046" stop-color="#fff078"/><stop offset="0.8334" stop-color="#fffa8c"/><stop offset="0.8456" stop-color="#fff27a"/><stop offset="0.8595" stop-color="#ffd854"/><stop offset="0.8751" stop-color="#f6bc44"/><stop offset="0.8908" stop-color="#d8a046"/><stop offset="0.9064" stop-color="#a88444"/><stop offset="0.9203" stop-color="#665230"/></linearGradient>
<linearGradient id="r26"><stop offset="0.0757" stop-color="#604e2e"/><stop offset="0.1026" stop-color="#8e703c"/><stop offset="0.1370" stop-color="#c09044"/><stop offset="0.1737" stop-color="#e0a444"/><stop offset="0.1909" stop-color="#f6bf4a"/><stop offset="0.1982" stop-color="#ffe064"/><stop offset="0.2088" stop-color="#ffdc5a"/><stop offset="0.2213" stop-color="#ffd856"/><stop offset="0.2309" stop-color="#ffe870"/><stop offset="0.2395" stop-color="#ffff9c"/><stop offset="0.2462" stop-color="#ffff9c"/><stop offset="0.2622" stop-color="#ffff9c"/><stop offset="0.2813" stop-color="#ffec70"/><stop offset="0.3100" stop-color="#ffde5c"/><stop offset="0.3514" stop-color="#fcca4c"/><stop offset="0.3817" stop-color="#e0a040"/><stop offset="0.4022" stop-color="#7a6236"/><stop offset="0.4090" stop-color="#7a6236"/><stop offset="0.4198" stop-color="#e8ac40"/><stop offset="0.4397" stop-color="#ffcc4c"/><stop offset="0.4795" stop-color="#ffe260"/><stop offset="0.5000" stop-color="#ffe464"/><stop offset="0.6214" stop-color="#ffe464"/><stop offset="0.6555" stop-color="#ffd050"/><stop offset="0.6754" stop-color="#eaac42"/><stop offset="0.6862" stop-color="#7a6236"/><stop offset="0.6930" stop-color="#7a6236"/><stop offset="0.7097" stop-color="#c89644"/><stop offset="0.7499" stop-color="#f2ba46"/><stop offset="0.7787" stop-color="#ffd252"/><stop offset="0.8045" stop-color="#fff078"/><stop offset="0.8332" stop-color="#fffa8c"/><stop offset="0.8450" stop-color="#fff27a"/><stop offset="0.8585" stop-color="#ffd854"/><stop offset="0.8736" stop-color="#f6bc44"/><stop offset="0.8887" stop-color="#d8a046"/><stop offset="0.9039" stop-color="#a88444"/><stop offset="0.9173" stop-color="#665230"/></linearGradient>
<linearGradient id="r27"><stop offset="0.0783" stop-color="#604e2e"/><stop offset="0.1054" stop-color="#8e703c"/><stop offset="0.1399" stop-color="#c09044"/><stop offset="0.1768" stop-color="#e0a444"/><stop offset="0.1941" stop-color="#f6c04a"/><stop offset="0.2014" stop-color="#ffe063"/><stop offset="0.2113" stop-color="#ffdc5a"/><stop offset="0.2229" stop-color="#ffd856"/><stop offset="0.2318" stop-color="#ffe870"/><stop offset="0.2398" stop-color="#ffff9c"/><stop offset="0.2461" stop-color="#ffff9c"/><stop offset="0.2620" stop-color="#ffff9c"/><stop offset="0.2812" stop-color="#ffec70"/><stop offset="0.3098" stop-color="#ffde5c"/><stop offset="0.3513" stop-color="#fcca4c"/><stop offset="0.3815" stop-color="#e0a040"/><stop offset="0.4020" stop-color="#7a6236"/><stop offset="0.4089" stop-color="#7a6236"/><stop offset="0.4197" stop-color="#e8ac40"/><stop offset="0.4395" stop-color="#ffcc4c"/><stop offset="0.4793" stop-color="#ffe260"/><stop offset="0.5000" stop-color="#ffe464"/><stop offset="0.6215" stop-color="#ffe464"/><stop offset="0.6555" stop-color="#ffd050"/><stop offset="0.6754" stop-color="#eaac42"/><stop offset="0.6862" stop-color="#7a6236"/><stop offset="0.6930" stop-color="#7a6236"/><stop offset="0.7097" stop-color="#c89644"/><stop offset="0.7499" stop-color="#f2ba46"/><stop offset="0.7786" stop-color="#ffd252"/><stop offset="0.8044" stop-color="#fff078"/><stop offset="0.8330" stop-color="#fffa8c"/><stop offset="0.8444" stop-color="#fff27a"/><stop offset="0.8574" stop-color="#ffd854"/><stop offset="0.8721" stop-color="#f6bc44"/><stop offset="0.8867" stop-color="#d8a046"/><stop offset="0.9013" stop-color="#a88444"/><stop offset="0.9143" stop-color="#665230"/></linearGradient>
<linearGradient id="r28"><stop offset="0.0810" stop-color="#604e2e"/><stop offset="0.1082" stop-color="#8e703c"/><stop offset="0.1428" stop-color="#c09044"/><stop offset="0.1799" stop-color="#e0a444"/><stop offset="0.1973" stop-color="#f6c04b"/><stop offset="0.2047" stop-color="#ffdf63"/><stop offset="0.2137" stop-color="#ffdc5a"/><stop offset="0.2244" stop-color="#ffd856"/><stop offset="0.2327" stop-color="#ffe870"/><stop offset="0.2401" stop-color="#ffff9c"/><stop offset="0.2459" stop-color="#ffff9c"/><stop offset="0.2618" stop-color="#ffff9c"/><stop offset="0.2809" stop-color="#ffec70"/><stop offset="0.3096" stop-color="#ffde5c"/><stop offset="0.3511" stop-color="#fcca4c"/><stop offset="0.3814" stop-color="#e0a040"/><stop offset="0.4019" stop-color="#7d6436"/><stop offset="0.4087" stop-color="#7d6537"/><stop offset="0.4195" stop-color="#e9ad41"/><stop offset="0.4394" stop-color="#ffcc4c"/><stop offset="0.4792" stop-color="#ffe260"/><stop offset="0.5000" stop-color="#ffe464"/><stop offset="0.6215" stop-color="#ffe464"/><stop offset="0.6556" stop-color="#ffd050"/><stop offset="0.6755" stop-color="#ebad43"/><stop offset="0.6862" stop-color="#7d6537"/><stop offset="0.6931" stop-color="#7d6436"/><stop offset="0.7096" stop-color="#c99744"/><stop offset="0.7494" stop-color="#f2ba46"/><stop offset="0.7778" stop-color="#ffd252"/><stop offset="0.8034" stop-color="#fff078"/><stop offset="0.8318" stop-color="#fffa8c"/><stop offset="0.8430" stop-color="#fff27a"/><stop offset="0.8557" stop-color="#ffd854"/><stop offset="0.8700" stop-color="#f6bc44"/><stop offset="0.8843" stop-color="#d8a046"/><stop offset="0.8986" stop-color="#a88444"/><stop offset="0.9113" stop-color="#665230"/></linearGradient>
<linearGradient id="r29"><stop offset="0.0836" stop-color="#604e2e"/><stop offset="0.1109" stop-color="#8e703c"/><stop offset="0.1457" stop-color="#c09044"/><stop offset="0.1830" stop-color="#e0a444"/><stop offset="0.2005" stop-color="#f6c14b"/><stop offset="0.2079" stop-color="#ffdf62"/><stop offset="0.2161" stop-color="#ffdc5a"/><stop offset="0.2259" stop-color="#ffd856"/><stop offset="0.2335" stop-color="#ffe870"/><stop offset="0.2402" stop-color="#ffff9c"/><stop offset="0.2455" stop-color="#ffff9c"/><stop offset="0.2615" stop-color="#ffff9c"/><stop offset="0.2806" stop-color="#ffec70"/><stop offset="0.3094" stop-color="#ffde5c"/><stop offset="0.3509" stop-color="#fcca4c"/><stop offset="0.3812" stop-color="#e1a140"/><stop offset="0.4017" stop-color="#836837"/><stop offset="0.4085" stop-color="#846b38"/><stop offset="0.4193" stop-color="#eab042"/><stop offset="0.4392" stop-color="#ffce4e"/><stop offset="0.4790" stop-color="#ffe260"/><stop offset="0.5000" stop-color="#ffe464"/><stop offset="0.6215" stop-color="#ffe464"/><stop offset="0.6556" stop-color="#ffd151"/><stop offset="0.6755" stop-color="#ecb044"/><stop offset="0.6863" stop-color="#846b38"/><stop offset="0.6931" stop-color="#826737"/><stop offset="0.7093" stop-color="#cb9844"/><stop offset="0.7485" stop-color="#f2ba46"/><stop offset="0.7764" stop-color="#ffd252"/><stop offset="0.8016" stop-color="#fff078"/><stop offset="0.8296" stop-color="#fffa8c"/><stop offset="0.8406" stop-color="#fff27a"/><stop offset="0.8532" stop-color="#ffd854"/><stop offset="0.8674" stop-color="#f6bc44"/><stop offset="0.8816" stop-color="#d8a046"/><stop offset="0.8957" stop-color="#a88444"/><stop offset="0.9083" stop-color="#665230"/></linearGradient>
<linearGradient id="r30"><stop offset="0.0863" stop-color="#604e2e"/><stop offset="0.1137" stop-color="#8e703c"/><stop offset="0.1487" stop-color="#c09044"/><stop offset="0.1861" stop-color="#e0a444"/><stop offset="0.2037" stop-color="#f7c24b"/><stop offset="0.2111" stop-color="#ffde62"/><stop offset="0.2186" stop-color="#ffdc5a"/><stop offset="0.2274" stop-color="#ffd856"/><stop offset="0.2343" stop-color="#ffe870"/><stop offset="0.2404" stop-color="#ffff9c"/><stop offset="0.2452" stop-color="#ffff9c"/><stop offset="0.2610" stop-color="#ffff9c"/><stop offset="0.2801" stop-color="#ffec70"/><stop offset="0.3087" stop-color="#ffde5c"/><stop offset="0.3499" stop-color="#fcca4c"/><stop offset="0.3801" stop-color="#e2a240"/><stop offset="0.4005" stop-color="#886c38"/><stop offset="0.4073" stop-color="#8b703a"/><stop offset="0.4181" stop-color="#ebb244"/><stop offset="0.4380" stop-color="#ffce4e"/><stop offset="0.4777" stop-color="#ffe260"/><stop offset="0.5000" stop-color="#ffe464"/><stop offset="0.6215" stop-color="#ffe464"/><stop offset="0.6556" stop-color="#ffd252"/><stop offset="0.6755" stop-color="#edb245"/><stop offset="0.6863" stop-color="#8b703a"/><stop offset="0.6931" stop-color="#886b37"/><stop offset="0.7090" stop-color="#cc9944"/><stop offset="0.7475" stop-color="#f2ba46"/><stop offset="0.7751" stop-color="#ffd252"/><stop offset="0.7999" stop-color="#fff078"/><stop offset="0.8274" stop-color="#fffa8c"/><stop offset="0.8383" stop-color="#fff27a"/><stop offset="0.8508" stop-color="#ffd854"/><stop offset="0.8648" stop-color="#f6bc44"/><stop offset="0.8788" stop-color="#d8a046"/><stop offset="0.8929" stop-color="#a88444"/><stop offset="0.9053" stop-color="#665230"/></linearGradient>
<linearGradient id="r31"><stop offset="0.0889" stop-color="#604e2e"/><stop offset="0.1165" stop-color="#8e703c"/><stop offset="0.1516" stop-color="#c09044"/><stop offset="0.1892" stop-color="#e0a444"/><stop offset="0.2069" stop-color="#f7c24b"/><stop offset="0.2143" stop-color="#ffde61"/><stop offset="0.2210" stop-color="#ffdc5a"/><stop offset="0.2289" stop-color="#ffd856"/><stop offset="0.2351" stop-color="#ffe870"/><stop offset="0.2406" stop-color="#ffff9c"/><stop offset="0.2448" stop-color="#ffff9c"/><stop offset="0.2606" stop-color="#ffff9c"/><stop offset="0.2795" stop-color="#ffec70"/><stop offset="0.3079" stop-color="#ffde5c"/><stop offset="0.3488" stop-color="#fcca4c"/><stop offset="0.3788" stop-color="#e3a341"/><stop offset="0.3990" stop-color="#8e6f38"/><stop offset="0.4058" stop-color="#91763c"/><stop offset="0.4166" stop-color="#ecb445"/><stop offset="0.4365" stop-color="#ffd050"/><stop offset="0.4763" stop-color="#ffe260"/><stop offset="0.5000" stop-color="#ffe464"/><stop offset="0.6215" stop-color="#ffe464"/><stop offset="0.6556" stop-color="#ffd353"/><stop offset="0.6755" stop-color="#eeb447"/><stop offset="0.6863" stop-color="#91763c"/><stop offset="0.6931" stop-color="#8d6e38"/><stop offset="0.7087" stop-color="#ce9a44"/><stop offset="0.7466" stop-color="#f2ba46"/><stop offset="0.7737" stop-color="#ffd252"/><stop offset="0.7981" stop-color="#fff078"/><stop offset="0.8252" stop-color="#fffa8c"/><stop offset="0.8360" stop-color="#fff27a"/><stop offset="0.8483" stop-color="#ffd854"/><stop offset="0.8622" stop-color="#f6bc44"/><stop offset="0.8761" stop-color="#d8a046"/><stop offset="0.8900" stop-color="#a88444"/><stop offset="0.9023" stop-color="#665230"/></linearGradient>
<linearGradient id="r32"><stop offset="0.0915" stop-color="#604e2e"/><stop offset="0.1193" stop-color="#8e703c"/><stop offset="0.1545" stop-color="#c09044"/><stop offset="0.1923" stop-color="#e0a444"/><stop offset="0.2101" stop-color="#f7c34b"/><stop offset="0.2175" stop-color="#ffdd60"/><stop offset="0.2234" stop-color="#ffdc5a"/><stop offset="0.2304" stop-color="#ffd856"/><stop offset="0.2358" stop-color="#ffe870"/><stop offset="0.2407" stop-color="#ffff9c"/><stop offset="0.2445" stop-color="#ffff9c"/><stop offset="0.2601" stop-color="#ffff9c"/><stop offset="0.2789" stop-color="#ffec70"/><stop offset="0.3071" stop-color="#ffde5c"/><stop offset="0.3477" stop-color="#fcca4c"/><stop offset="0.3775" stop-color="#e4a441"/><stop offset="0.3975" stop-color="#947339"/><stop offset="0.4043" stop-color="#987c3d"/><stop offset="0.4151" stop-color="#edb746"/><stop offset="0.4350" stop-color="#ffd050"/><stop offset="0.4748" stop-color="#ffe260"/><stop offset="0.5000" stop-color="#ffe464"/><stop offset="0.6216" stop-color="#ffe464"/><stop offset="0.6556" stop-color="#ffd454"/><stop offset="0.6755" stop-color="#efb748"/><stop offset="0.6863" stop-color="#987c3d"/><stop offset="0.6931" stop-color="#937238"/><stop offset="0.7084" stop-color="#d09b44"/><stop offset="0.7457" stop-color="#f2ba46"/><stop offset="0.7723" stop-color="#ffd252"/><stop offset="0.7963" stop-color="#fff078"/><stop offset="0.8230" stop-color="#fffa8c"/><stop offset="0.8337" stop-color="#fff27a"/><stop offset="0.8459" stop-color="#ffd854"/><stop offset="0.8596" stop-color="#f6bc44"/><stop offset="0.8734" stop-color="#d8a046"/><stop offset="0.8871" stop-color="#a88444"/><stop offset="0.8993" stop-color="#665230"/></linearGradient>
<linearGradient id="r33"><stop offset="0.0942" stop-color="#604e2e"/><stop offset="0.1220" stop-color="#8e703c"/><stop offset="0.1574" stop-color="#c09044"/><stop offset="0.1954" stop-color="#e0a444"/><stop offset="0.2133" stop-color="#f8c34b"/><stop offset="0.2207" stop-color="#ffdd60"/><stop offset="0.2259" stop-color="#ffdc5a"/><stop offset="0.2319" stop-color="#ffd856"/><stop offset="0.2366" stop-color="#ffe870"/><stop offset="0.2409" stop-color="#ffff9c"/><stop offset="0.2441" stop-color="#ffff9c"/><stop offset="0.2597" stop-color="#ffff9c"/><stop offset="0.2783" stop-color="#ffec70"/><stop offset="0.3063" stop-color="#ffde5c"/><stop offset="0.3466" stop-color="#fcca4c"/><stop offset="0.3762" stop-color="#e4a541"/><stop offset="0.3960" stop-color="#9a7739"/><stop offset="0.4029" stop-color="#9f823f"/><stop offset="0.4137" stop-color="#eeb948"/><stop offset="0.4335" stop-color="#ffd252"/><stop offset="0.4733" stop-color="#ffe260"/><stop offset="0.5000" stop-color="#ffe464"/><stop offset="0.6216" stop-color="#ffe464"/><stop offset="0.6557" stop-color="#ffd454"/><stop offset="0.6755" stop-color="#f0b949"/><stop offset="0.6863" stop-color="#9f823f"/><stop offset="0.6932" stop-color="#987539"/><stop offset="0.7081" stop-color="#d19c43"/><stop offset="0.7448" stop-color="#f2ba46"/><stop offset="0.7710" stop-color="#ffd252"/><stop offset="0.7946" stop-color="#fff078"/><stop offset="0.8208" stop-color="#fffa8c"/><stop offset="0.8313" stop-color="#fff27a"/><stop offset="0.8434" stop-color="#ffd854"/><stop offset="0.8570" stop-color="#f6bc44"/><stop offset="0.8706" stop-color="#d8a046"/><stop offset="0.8842" stop-color="#a88444"/><stop offset="0.8963" stop-color="#665230"/></linearGradient>
<linearGradient id="r34"><stop offset="0.0968" stop-color="#604e2e"/><stop offset="0.1248" stop-color="#8e703c"/><stop offset="0.1604" stop-color="#c09044"/><stop offset="0.1985" stop-color="#e0a444"/><stop offset="0.2165" stop-color="#f8c44c"/><stop offset="0.2239" stop-color="#ffdd5f"/><stop offset="0.2283" stop-color="#ffdc5a"/><stop offset="0.2335" stop-color="#ffd856"/><stop offset="0.2374" stop-color="#ffe870"/><stop offset="0.2410" stop-color="#ffff9c"/><stop offset="0.2438" stop-color="#ffff9c"/><stop offset="0.2592" stop-color="#ffff9c"/><stop offset="0.2777" stop-color="#ffec70"/><stop offset="0.3055" stop-color="#ffde5c"/><stop offset="0.3456" stop-color="#fcca4c"/><stop offset="0.3748" stop-color="#e5a641"/><stop offset="0.3946" stop-color="#a07b3a"/><stop offset="0.4014" stop-color="#a58840"/><stop offset="0.4122" stop-color="#efbc49"/><stop offset="0.4321" stop-color="#ffd252"/><stop offset="0.4718" stop-color="#ffe260"/><stop offset="0.5000" stop-color="#ffe464"/><stop offset="0.6216" stop-color="#ffe464"/><stop offset="0.6557" stop-color="#ffd555"/><stop offset="0.6756" stop-color="#f1bc4a"/><stop offset="0.6864" stop-color="#a58840"/><stop offset="0.6932" stop-color="#9e7939"/><stop offset="0.7078" stop-color="#d39d43"/><stop offset="0.7439" stop-color="#f2ba46"/><stop offset="0.7696" stop-color="#ffd252"/><stop offset="0.7928" stop-color="#fff078"/><stop offset="0.8186" stop-color="#fffa8c"/><stop offset="0.8290" stop-color="#fff27a"/><stop offset="0.8410" stop-color="#ffd854"/><stop offset="0.8544" stop-color="#f6bc44"/><stop offset="0.8679" stop-color="#d8a046"/><stop offset="0.8814" stop-color="#a88444"/><stop offset="0.8933" stop-color="#665230"/></linearGradient>
<linearGradient id="r35"><stop offset="0.0995" stop-color="#604e2e"/><stop offset="0.1277" stop-color="#8e703c"/><stop offset="0.1635" stop-color="#c09044"/><stop offset="0.2019" stop-color="#e0a444"/><stop offset="0.2201" stop-color="#f8c44c"/><stop offset="0.2275" stop-color="#ffdc5e"/><stop offset="0.2316" stop-color="#ffdc5a"/><stop offset="0.2364" stop-color="#ffd856"/><stop offset="0.2401" stop-color="#ffe870"/><stop offset="0.2435" stop-color="#ffff9c"/><stop offset="0.2461" stop-color="#ffff9c"/><stop offset="0.2610" stop-color="#ffff9c"/><stop offset="0.2790" stop-color="#ffec70"/><stop offset="0.3059" stop-color="#ffde5c"/><stop offset="0.3447" stop-color="#fcca4c"/><stop offset="0.3731" stop-color="#e6a742"/><stop offset="0.3921" stop-color="#a67e3a"/><stop offset="0.3989" stop-color="#ac8e42"/><stop offset="0.4097" stop-color="#f1be4a"/><stop offset="0.4296" stop-color="#ffd454"/><stop offset="0.4694" stop-color="#ffe260"/><stop offset="0.5000" stop-color="#ffe464"/><stop offset="0.6225" stop-color="#ffe464"/><stop offset="0.6566" stop-color="#ffd656"/><stop offset="0.6765" stop-color="#f2be4c"/><stop offset="0.6873" stop-color="#ac8e42"/><stop offset="0.6941" stop-color="#a37c3a"/><stop offset="0.7082" stop-color="#d59e43"/><stop offset="0.7432" stop-color="#f2ba46"/><stop offset="0.7682" stop-color="#ffd252"/><stop offset="0.7907" stop-color="#fff078"/><stop offset="0.8157" stop-color="#fffa8c"/><stop offset="0.8261" stop-color="#fff27a"/><stop offset="0.8381" stop-color="#ffd854"/><stop offset="0.8515" stop-color="#f6bc44"/><stop offset="0.8649" stop-color="#d8a046"/><stop offset="0.8784" stop-color="#a88444"/><stop offset="0.8903" stop-color="#665230"/></linearGradient>
<linearGradient id="r36"><stop offset="0.1021" stop-color="#604e2e"/><stop offset="0.1305" stop-color="#8e703c"/><stop offset="0.1667" stop-color="#c09044"/><stop offset="0.2054" stop-color="#e0a444"/><stop offset="0.2238" stop-color="#f8c54c"/><stop offset="0.2312" stop-color="#ffdc5e"/><stop offset="0.2351" stop-color="#ffdc5a"/><stop offset="0.2397" stop-color="#ffd856"/><stop offset="0.2432" stop-color="#ffe870"/><stop offset="0.2464" stop-color="#ffff9c"/><stop offset="0.2489" stop-color="#ffff9c"/><stop offset="0.2633" stop-color="#ffff9c"/><stop offset="0.2806" stop-color="#ffec70"/><stop offset="0.3065" stop-color="#ffde5c"/><stop offset="0.3439" stop-color="#fcca4c"/><stop offset="0.3713" stop-color="#e7a842"/><stop offset="0.3895" stop-color="#ab823b"/><stop offset="0.3963" stop-color="#b39344"/><stop offset="0.4071" stop-color="#f2c04c"/><stop offset="0.4270" stop-color="#ffd454"/><stop offset="0.4668" stop-color="#ffe260"/><stop offset="0.5000" stop-color="#ffe464"/><stop offset="0.6236" stop-color="#ffe464"/><stop offset="0.6577" stop-color="#ffd757"/><stop offset="0.6776" stop-color="#f3c04d"/><stop offset="0.6884" stop-color="#b39344"/><stop offset="0.6952" stop-color="#a9803a"/><stop offset="0.7087" stop-color="#d69f43"/><stop offset="0.7425" stop-color="#f2ba46"/><stop offset="0.7667" stop-color="#ffd252"/><stop offset="0.7885" stop-color="#fff078"/><stop offset="0.8126" stop-color="#fffa8c"/><stop offset="0.8231" stop-color="#fff27a"/><stop offset="0.8350" stop-color="#ffd854"/><stop offset="0.8485" stop-color="#f6bc44"/><stop offset="0.8619" stop-color="#d8a046"/><stop offset="0.8754" stop-color="#a88444"/><stop offset="0.8873" stop-color="#665230"/></linearGradient>
<linearGradient id="r37"><stop offset="0.1048" stop-color="#604e2e"/><stop offset="0.1334" stop-color="#8e703c"/><stop offset="0.1698" stop-color="#c09044"/><stop offset="0.2089" stop-color="#e0a444"/><stop offset="0.2275" stop-color="#f9c54c"/><stop offset="0.2349" stop-color="#ffdb5d"/><stop offset="0.2386" stop-color="#ffdc5a"/><stop offset="0.2430" stop-color="#ffd856"/><stop offset="0.2463" stop-color="#ffe870"/><stop offset="0.2493" stop-color="#ffff9c"/><stop offset="0.2517" stop-color="#ffff9c"/><stop offset="0.2656" stop-color="#ffff9c"/><stop offset="0.2822" stop-color="#ffec70"/><stop offset="0.3071" stop-color="#ffde5c"/><stop offset="0.3431" stop-color="#fcca4c"/><stop offset="0.3695" stop-color="#e8a942"/><stop offset="0.3868" stop-color="#b1863c"/><stop offset="0.3937" stop-color="#b99945"/><stop offset="0.4045" stop-color="#f3c34d"/><stop offset="0.4243" stop-color="#ffd656"/><stop offset="0.4641" stop-color="#ffe260"/><stop offset="0.5000" stop-color="#ffe464"/><stop offset="0.6247" stop-color="#ffe464"/><stop offset="0.6588" stop-color="#ffd858"/><stop offset="0.6787" stop-color="#f4c34e"/><stop offset="0.6895" stop-color="#b99945"/><stop offset="0.6963" stop-color="#ae833b"/><stop offset="0.7092" stop-color="#d8a043"/><stop offset="0.7419" stop-color="#f2ba46"/><stop offset="0.7653" stop-color="#ffd152"/><stop offset="0.7863" stop-color="#ffee76"/><stop offset="0.8096" stop-color="#fff889"/><stop offset="0.8201" stop-color="#fff078"/><stop offset="0.8320" stop-color="#fed753"/><stop offset="0.8455" stop-color="#f6bc44"/><stop offset="0.8589" stop-color="#d8a046"/><stop offset="0.8724" stop-color="#a88444"/><stop offset="0.8843" stop-color="#665230"/></linearGradient>
<linearGradient id="r38"><stop offset="0.1074" stop-color="#604e2e"/><stop offset="0.1363" stop-color="#8e703c"/><stop offset="0.1730" stop-color="#c09044"/><stop offset="0.2124" stop-color="#e0a444"/><stop offset="0.2312" stop-color="#f9c64c"/><stop offset="0.2386" stop-color="#ffdb5d"/><stop offset="0.2421" stop-color="#ffdc5a"/><stop offset="0.2462" stop-color="#ffd856"/><stop offset="0.2494" stop-color="#ffe870"/><stop offset="0.2523" stop-color="#ffff9c"/><stop offset="0.2545" stop-color="#ffff9c"/><stop offset="0.2678" stop-color="#ffff9c"/><stop offset="0.2838" stop-color="#ffec70"/><stop offset="0.3077" stop-color="#ffde5c"/><stop offset="0.3424" stop-color="#fcca4c"/><stop offset="0.3676" stop-color="#e8a942"/><stop offset="0.3842" stop-color="#b78a3c"/><stop offset="0.3910" stop-color="#c09f47"/><stop offset="0.4018" stop-color="#f4c54f"/><stop offset="0.4217" stop-color="#ffd656"/><stop offset="0.4615" stop-color="#ffe260"/><stop offset="0.5000" stop-color="#ffe464"/><stop offset="0.6258" stop-color="#ffe464"/><stop offset="0.6599" stop-color="#ffd858"/><stop offset="0.6798" stop-color="#f5c550"/><stop offset="0.6906" stop-color="#c09f47"/><stop offset="0.6974" stop-color="#b4873b"/><stop offset="0.7098" stop-color="#daa243"/><stop offset="0.7413" stop-color="#f2ba46"/><stop offset="0.7638" stop-color="#fed151"/><stop offset="0.7841" stop-color="#ffed74"/><stop offset="0.8066" stop-color="#fff687"/><stop offset="0.8171" stop-color="#feee76"/><stop offset="0.8290" stop-color="#fed553"/><stop offset="0.8425" stop-color="#f6bc44"/><stop offset="0.8559" stop-color="#d8a046"/><stop offset="0.8694" stop-color="#a88444"/><stop offset="0.8813" stop-color="#665230"/></linearGradient>
<linearGradient id="r39"><stop offset="0.1101" stop-color="#604e2e"/><stop offset="0.1392" stop-color="#8e703c"/><stop offset="0.1762" stop-color="#c09044"/><stop offset="0.2158" stop-color="#e0a444"/><stop offset="0.2349" stop-color="#f9c64c"/><stop offset="0.2423" stop-color="#ffda5c"/><stop offset="0.2456" stop-color="#ffdc5a"/><stop offset="0.2495" stop-color="#ffd856"/><stop offset="0.2525" stop-color="#ffe870"/><stop offset="0.2552" stop-color="#fffe99"/><stop offset="0.2573" stop-color="#fffe99"/><stop offset="0.2701" stop-color="#fffe99"/><stop offset="0.2854" stop-color="#ffec70"/><stop offset="0.3084" stop-color="#ffde5c"/><stop offset="0.3416" stop-color="#fcca4c"/><stop offset="0.3658" stop-color="#e9aa42"/><stop offset="0.3816" stop-color="#bd8e3d"/><stop offset="0.3884" stop-color="#c6a548"/><stop offset="0.3992" stop-color="#f5c850"/><stop offset="0.4191" stop-color="#ffd858"/><stop offset="0.4588" stop-color="#ffe260"/><stop offset="0.5000" stop-color="#ffe464"/><stop offset="0.6269" stop-color="#ffe464"/><stop offset="0.6610" stop-color="#ffd959"/><stop offset="0.6809" stop-color="#f6c851"/><stop offset="0.6917" stop-color="#c6a548"/><stop offset="0.6985" stop-color="#b98a3c"/><stop offset="0.7103" stop-color="#dca343"/><stop offset="0.7406" stop-color="#f2ba46"/><stop offset="0.7623" stop-color="#fed051"/><stop offset="0.7819" stop-color="#ffeb73"/><stop offset="0.8036" stop-color="#fff585"/><stop offset="0.8140" stop-color="#feed74"/><stop offset="0.8260" stop-color="#fdd452"/><stop offset="0.8394" stop-color="#f6bc44"/><stop offset="0.8529" stop-color="#d8a046"/><stop offset="0.8664" stop-color="#a88444"/><stop offset="0.8783" stop-color="#665230"/></linearGradient>
<linearGradient id="r40"><stop offset="0.1127" stop-color="#604e2e"/><stop offset="0.1420" stop-color="#8e703c"/><stop offset="0.1793" stop-color="#c09044"/><stop offset="0.2193" stop-color="#e0a444"/><stop offset="0.2386" stop-color="#fac74c"/><stop offset="0.2460" stop-color="#ffda5c"/><stop offset="0.2491" stop-color="#ffdc5a"/><stop offset="0.2528" stop-color="#ffd856"/><stop offset="0.2556" stop-color="#ffe870"/><stop offset="0.2581" stop-color="#fffc96"/><stop offset="0.2601" stop-color="#fffc96"/><stop offset="0.2723" stop-color="#fffc96"/><stop offset="0.2870" stop-color="#ffec70"/><stop offset="0.3090" stop-color="#ffde5c"/><stop offset="0.3408" stop-color="#fcca4c"/><stop offset="0.3640" stop-color="#eaab42"/><stop offset="0.3789" stop-color="#c2923e"/><stop offset="0.3857" stop-color="#cdaa4a"/><stop offset="0.3965" stop-color="#f6ca52"/><stop offset="0.4164" stop-color="#ffd858"/><stop offset="0.4562" stop-color="#ffe260"/><stop offset="0.5000" stop-color="#ffe464"/><stop offset="0.6280" stop-color="#ffe464"/><stop offset="0.6621" stop-color="#ffda5a"/><stop offset="0.6820" stop-color="#f7ca52"/><stop offset="0.6928" stop-color="#cdaa4a"/><stop offset="0.6996" stop-color="#bf8e3c"/><stop offset="0.7108" stop-color="#dda443"/><stop offset="0.7400" stop-color="#f2ba46"/><stop offset="0.7609" stop-color="#fed050"/><stop offset="0.7797" stop-color="#ffea71"/><stop offset="0.8005" stop-color="#fff382"/><stop offset="0.8110" stop-color="#feeb72"/><stop offset="0.8230" stop-color="#fdd352"/><stop offset="0.8364" stop-color="#f6bc44"/><stop offset="0.8499" stop-color="#d8a046"/><stop offset="0.8634" stop-color="#a88444"/><stop offset="0.8753" stop-color="#665230"/></linearGradient>
<linearGradient id="r41"><stop offset="0.1154" stop-color="#604e2e"/><stop offset="0.1449" stop-color="#8e703c"/><stop offset="0.1825" stop-color="#c09044"/><stop offset="0.2228" stop-color="#e0a444"/><stop offset="0.2423" stop-color="#fac84d"/><stop offset="0.2497" stop-color="#ffda5b"/><stop offset="0.2526" stop-color="#ffdc5a"/><stop offset="0.2560" stop-color="#ffd856"/><stop offset="0.2587" stop-color="#ffe870"/><stop offset="0.2611" stop-color="#fffa93"/><stop offset="0.2629" stop-color="#fffa93"/><stop offset="0.2746" stop-color="#fffa93"/><stop offset="0.2886" stop-color="#ffec70"/><stop offset="0.3096" stop-color="#ffde5c"/><stop offset="0.3400" stop-color="#fcca4c"/><stop offset="0.3622" stop-color="#ebac43"/><stop offset="0.3763" stop-color="#c8953e"/><stop offset="0.3831" stop-color="#d4b04c"/><stop offset="0.3939" stop-color="#f8cc53"/><stop offset="0.4138" stop-color="#ffda5a"/><stop offset="0.4536" stop-color="#ffe260"/><stop offset="0.5000" stop-color="#ffe464"/><stop offset="0.6291" stop-color="#ffe464"/><stop offset="0.6632" stop-color="#ffdb5b"/><stop offset="0.6831" stop-color="#f8cc54"/><stop offset="0.6939" stop-color="#d4b04c"/><stop offset="0.7007" stop-color="#c4913d"/><stop offset="0.7113" stop-color="#dfa543"/><stop offset="0.7394" stop-color="#f2ba46"/><stop offset="0.7594" stop-color="#fecf50"/><stop offset="0.7775" stop-color="#fee96f"/><stop offset="0.7975" stop-color="#fef180"/><stop offset="0.8080" stop-color="#fee970"/><stop offset="0.8200" stop-color="#fcd151"/><stop offset="0.8334" stop-color="#f6bc44"/><stop offset="0.8469" stop-color="#d8a046"/><stop offset="0.8603" stop-color="#a88444"/><stop offset="0.8723" stop-color="#665230"/></linearGradient>
<linearGradient id="r42"><stop offset="0.1180" stop-color="#604e2e"/><stop offset="0.1478" stop-color="#8e703c"/><stop offset="0.1857" stop-color="#c09044"/><stop offset="0.2263" stop-color="#e0a444"/><stop offset="0.2460" stop-color="#fac84d"/><stop offset="0.2534" stop-color="#ffd95a"/><stop offset="0.2561" stop-color="#ffdc5a"/><stop offset="0.2593" stop-color="#ffd856"/><stop offset="0.2618" stop-color="#ffe870"/><stop offset="0.2640" stop-color="#fff990"/><stop offset="0.2657" stop-color="#fff990"/><stop offset="0.2769" stop-color="#fff990"/><stop offset="0.2902" stop-color="#ffec70"/><stop offset="0.3103" stop-color="#ffde5c"/><stop offset="0.3392" stop-color="#fcca4c"/><stop offset="0.3604" stop-color="#ecad43"/><stop offset="0.3736" stop-color="#ce993f"/><stop offset="0.3805" stop-color="#dab64d"/><stop offset="0.3913" stop-color="#f9cf54"/><stop offset="0.4111" stop-color="#ffda5a"/><stop offset="0.4509" stop-color="#ffe260"/><stop offset="0.5000" stop-color="#ffe464"/><stop offset="0.6302" stop-color="#ffe464"/><stop offset="0.6643" stop-color="#ffdc5c"/><stop offset="0.6842" stop-color="#f9cf55"/><stop offset="0.6950" stop-color="#dab64d"/><stop offset="0.7018" stop-color="#ca953d"/><stop offset="0.7118" stop-color="#e1a643"/><stop offset="0.7388" stop-color="#f2ba46"/><stop offset="0.7580" stop-color="#fdcf50"/><stop offset="0.7753" stop-color="#fee76e"/><stop offset="0.7945" stop-color="#feef7e"/><stop offset="0.8050" stop-color="#fde76e"/><stop offset="0.8169" stop-color="#fcd050"/><stop offset="0.8304" stop-color="#f6bc44"/><stop offset="0.8439" stop-color="#d8a046"/><stop offset="0.8573" stop-color="#a88444"/><stop offset="0.8693" stop-color="#665230"/></linearGradient>
<linearGradient id="r43"><stop offset="0.1207" stop-color="#604e2e"/><stop offset="0.1507" stop-color="#8e703c"/><stop offset="0.1889" stop-color="#c09044"/><stop offset="0.2298" stop-color="#e0a444"/><stop offset="0.2497" stop-color="#fac94d"/><stop offset="0.2571" stop-color="#ffd95a"/><stop offset="0.2596" stop-color="#ffdc5a"/><stop offset="0.2626" stop-color="#ffd856"/><stop offset="0.2649" stop-color="#ffe870"/><stop offset="0.2669" stop-color="#fff78d"/><stop offset="0.2685" stop-color="#fff78d"/><stop offset="0.2791" stop-color="#fff78d"/><stop offset="0.2918" stop-color="#ffec70"/><stop offset="0.3109" stop-color="#ffde5c"/><stop offset="0.3384" stop-color="#fcca4c"/><stop offset="0.3585" stop-color="#ecae43"/><stop offset="0.3710" stop-color="#d49d3f"/><stop offset="0.3778" stop-color="#e1bc4f"/><stop offset="0.3886" stop-color="#fad156"/><stop offset="0.4085" stop-color="#ffdc5c"/><stop offset="0.4483" stop-color="#ffe260"/><stop offset="0.5000" stop-color="#ffe464"/><stop offset="0.6313" stop-color="#ffe464"/><stop offset="0.6654" stop-color="#ffdc5c"/><stop offset="0.6853" stop-color="#fad156"/><stop offset="0.6961" stop-color="#e1bc4f"/><stop offset="0.7029" stop-color="#cf983e"/><stop offset="0.7124" stop-color="#e2a742"/><stop offset="0.7381" stop-color="#f2ba46"/><stop offset="0.7565" stop-color="#fdce4f"/><stop offset="0.7731" stop-color="#fee66c"/><stop offset="0.7915" stop-color="#feee7b"/><stop offset="0.8019" stop-color="#fde66d"/><stop offset="0.8139" stop-color="#fbcf50"/><stop offset="0.8274" stop-color="#f6bc44"/><stop offset="0.8409" stop-color="#d8a046"/><stop offset="0.8543" stop-color="#a88444"/><stop offset="0.8663" stop-color="#665230"/></linearGradient>
<linearGradient id="r44"><stop offset="0.1233" stop-color="#604e2e"/><stop offset="0.1535" stop-color="#8e703c"/><stop offset="0.1920" stop-color="#c09044"/><stop offset="0.2333" stop-color="#e0a444"/><stop offset="0.2534" stop-color="#fbc94d"/><stop offset="0.2607" stop-color="#ffd859"/><stop offset="0.2631" stop-color="#ffdc5a"/><stop offset="0.2658" stop-color="#ffd856"/><stop offset="0.2679" stop-color="#ffe870"/><stop offset="0.2698" stop-color="#fff68a"/><stop offset="0.2713" stop-color="#fff68a"/><stop offset="0.2814" stop-color="#fff68a"/><stop offset="0.2934" stop-color="#ffec70"/><stop offset="0.3115" stop-color="#ffde5c"/><stop offset="0.3376" stop-color="#fcca4c"/><stop offset="0.3567" stop-color="#edaf43"/><stop offset="0.3684" stop-color="#daa140"/><stop offset="0.3752" stop-color="#e8c250"/><stop offset="0.3860" stop-color="#fbd457"/><stop offset="0.4059" stop-color="#ffdc5c"/><stop offset="0.4456" stop-color="#ffe260"/><stop offset="0.5000" stop-color="#ffe464"/><stop offset="0.6324" stop-color="#ffe464"/><stop offset="0.6665" stop-color="#ffdd5d"/><stop offset="0.6864" stop-color="#fbd457"/><stop offset="0.6972" stop-color="#e8c250"/><stop offset="0.7040" stop-color="#d59c3e"/><stop offset="0.7129" stop-color="#e4a842"/><stop offset="0.7375" stop-color="#f2ba46"/><stop offset="0.7551" stop-color="#fdce4f"/><stop offset="0.7709" stop-color="#fee46b"/><stop offset="0.7884" stop-color="#feec79"/><stop offset="0.7989" stop-color="#fde46b"/><stop offset="0.8109" stop-color="#face4f"/><stop offset="0.8244" stop-color="#f6bc44"/><stop offset="0.8379" stop-color="#d8a046"/><stop offset="0.8513" stop-color="#a88444"/><stop offset="0.8633" stop-color="#665230"/></linearGradient>
<linearGradient id="r45"><stop offset="0.1260" stop-color="#604e2e"/><stop offset="0.1564" stop-color="#8e703c"/><stop offset="0.1952" stop-color="#c09044"/><stop offset="0.2367" stop-color="#e0a444"/><stop offset="0.2571" stop-color="#fbca4d"/><stop offset="0.2644" stop-color="#ffd858"/><stop offset="0.2666" stop-color="#ffdc5a"/><stop offset="0.2691" stop-color="#ffd856"/><stop offset="0.2711" stop-color="#ffe870"/><stop offset="0.2728" stop-color="#fff487"/><stop offset="0.2742" stop-color="#fff487"/><stop offset="0.2837" stop-color="#fff487"/><stop offset="0.2950" stop-color="#ffec70"/><stop offset="0.3121" stop-color="#ffde5c"/><stop offset="0.3368" stop-color="#fcca4c"/><stop offset="0.3548" stop-color="#eeb044"/><stop offset="0.3656" stop-color="#e0a440"/><stop offset="0.3724" stop-color="#eec852"/><stop offset="0.3832" stop-color="#fcd658"/><stop offset="0.4031" stop-color="#ffde5e"/><stop offset="0.4429" stop-color="#ffe260"/><stop offset="0.5000" stop-color="#ffe464"/><stop offset="0.6339" stop-color="#ffe464"/><stop offset="0.6680" stop-color="#ffde5e"/><stop offset="0.6879" stop-color="#fcd659"/><stop offset="0.6987" stop-color="#eec852"/><stop offset="0.7055" stop-color="#da9f3f"/><stop offset="0.7137" stop-color="#e6a942"/><stop offset="0.7368" stop-color="#f2ba46"/><stop offset="0.7533" stop-color="#fdcd4f"/><stop offset="0.7682" stop-color="#fee369"/><stop offset="0.7847" stop-color="#feea77"/><stop offset="0.7953" stop-color="#fde269"/><stop offset="0.8074" stop-color="#facc4e"/><stop offset="0.8210" stop-color="#f6bc44"/><stop offset="0.8346" stop-color="#d8a046"/><stop offset="0.8482" stop-color="#a88444"/><stop offset="0.8603" stop-color="#665230"/></linearGradient>
<linearGradient id="r46"><stop offset="0.1286" stop-color="#604e2e"/><stop offset="0.1593" stop-color="#8e703c"/><stop offset="0.1984" stop-color="#c09044"/><stop offset="0.2402" stop-color="#e0a444"/><stop offset="0.2607" stop-color="#fbca4d"/><stop offset="0.2681" stop-color="#ffd758"/><stop offset="0.2701" stop-color="#ffdc5a"/><stop offset="0.2724" stop-color="#ffd856"/><stop offset="0.2742" stop-color="#ffe870"/><stop offset="0.2759" stop-color="#fff284"/><stop offset="0.2771" stop-color="#fff284"/><stop offset="0.2860" stop-color="#fff284"/><stop offset="0.2967" stop-color="#ffec70"/><stop offset="0.3127" stop-color="#ffde5c"/><stop offset="0.3359" stop-color="#fcca4c"/><stop offset="0.3528" stop-color="#efb144"/><stop offset="0.3627" stop-color="#e5a841"/><stop offset="0.3695" stop-color="#f5cd54"/><stop offset="0.3803" stop-color="#fdd85a"/><stop offset="0.4002" stop-color="#ffde5e"/><stop offset="0.4400" stop-color="#ffe260"/><stop offset="0.5000" stop-color="#ffe464"/><stop offset="0.6358" stop-color="#ffe464"/><stop offset="0.6699" stop-color="#ffdf5f"/><stop offset="0.6898" stop-color="#fdd85a"/><stop offset="0.7006" stop-color="#f5cd54"/><stop offset="0.7074" stop-color="#e0a33f"/><stop offset="0.7147" stop-color="#e7aa42"/><stop offset="0.7360" stop-color="#f2ba46"/><stop offset="0.7513" stop-color="#fccd4e"/><stop offset="0.7650" stop-color="#fee267"/><stop offset="0.7802" stop-color="#fee874"/><stop offset="0.7910" stop-color="#fce067"/><stop offset="0.8033" stop-color="#f9cb4e"/><stop offset="0.8172" stop-color="#f6bc44"/><stop offset="0.8311" stop-color="#d8a046"/><stop offset="0.8450" stop-color="#a88444"/><stop offset="0.8573" stop-color="#665230"/></linearGradient>
<linearGradient id="r47"><stop offset="0.1313" stop-color="#604e2e"/><stop offset="0.1621" stop-color="#8e703c"/><stop offset="0.2014" stop-color="#c09044"/><stop offset="0.2435" stop-color="#e0a444"/><stop offset="0.2641" stop-color="#fbcb4e"/><stop offset="0.2715" stop-color="#ffd757"/><stop offset="0.2734" stop-color="#ffdc5a"/><stop offset="0.2756" stop-color="#ffd856"/><stop offset="0.2773" stop-color="#ffe870"/><stop offset="0.2788" stop-color="#fff180"/><stop offset="0.2800" stop-color="#fff180"/><stop offset="0.2884" stop-color="#fff180"/><stop offset="0.2983" stop-color="#ffec70"/><stop offset="0.3133" stop-color="#ffde5c"/><stop offset="0.3349" stop-color="#fcca4c"/><stop offset="0.3507" stop-color="#f0b244"/><stop offset="0.3598" stop-color="#ebac42"/><stop offset="0.3666" stop-color="#fcd355"/><stop offset="0.3774" stop-color="#fedb5b"/><stop offset="0.3973" stop-color="#ffe060"/><stop offset="0.4371" stop-color="#ffe260"/><stop offset="0.5000" stop-color="#ffe464"/><stop offset="0.6378" stop-color="#ffe464"/><stop offset="0.6719" stop-color="#ffe060"/><stop offset="0.6917" stop-color="#fedb5b"/><stop offset="0.7025" stop-color="#fcd355"/><stop offset="0.7094" stop-color="#e5a640"/><stop offset="0.7157" stop-color="#e9ab42"/><stop offset="0.7353" stop-color="#f2ba46"/><stop offset="0.7492" stop-color="#fccc4e"/><stop offset="0.7618" stop-color="#fee066"/><stop offset="0.7757" stop-color="#fee772"/><stop offset="0.7867" stop-color="#fcdf65"/><stop offset="0.7993" stop-color="#f9ca4d"/><stop offset="0.8134" stop-color="#f6bc44"/><stop offset="0.8276" stop-color="#d8a046"/><stop offset="0.8417" stop-color="#a88444"/><stop offset="0.8543" stop-color="#665230"/></linearGradient>
<linearGradient id="r48"><stop offset="0.1339" stop-color="#604e2e"/><stop offset="0.1648" stop-color="#8e703c"/><stop offset="0.2042" stop-color="#c09044"/><stop offset="0.2463" stop-color="#e0a444"/><stop offset="0.2670" stop-color="#fccb4e"/><stop offset="0.2744" stop-color="#ffd757"/><stop offset="0.2763" stop-color="#ffdc5a"/><stop offset="0.2785" stop-color="#ffd856"/><stop offset="0.2802" stop-color="#ffe870"/><stop offset="0.2818" stop-color="#ffef7d"/><stop offset="0.2830" stop-color="#ffef7d"/><stop offset="0.2907" stop-color="#ffef7d"/><stop offset="0.3000" stop-color="#ffec70"/><stop offset="0.3139" stop-color="#ffde5c"/><stop offset="0.3340" stop-color="#fcca4c"/><stop offset="0.3487" stop-color="#f0b244"/><stop offset="0.3569" stop-color="#eeae42"/><stop offset="0.3637" stop-color="#ffd656"/><stop offset="0.3745" stop-color="#ffdc5c"/><stop offset="0.3944" stop-color="#ffe060"/><stop offset="0.4342" stop-color="#ffe260"/><stop offset="0.5000" stop-color="#ffe464"/><stop offset="0.6397" stop-color="#ffe464"/><stop offset="0.6738" stop-color="#ffe060"/><stop offset="0.6937" stop-color="#ffdc5c"/><stop offset="0.7045" stop-color="#ffd656"/><stop offset="0.7113" stop-color="#e8a840"/><stop offset="0.7167" stop-color="#eaac42"/><stop offset="0.7345" stop-color="#f2ba46"/><stop offset="0.7472" stop-color="#fccc4d"/><stop offset="0.7586" stop-color="#fedf64"/><stop offset="0.7712" stop-color="#fee570"/><stop offset="0.7824" stop-color="#fcdd63"/><stop offset="0.7953" stop-color="#f8c84d"/><stop offset="0.8097" stop-color="#f6bc44"/><stop offset="0.8241" stop-color="#d8a046"/><stop offset="0.8385" stop-color="#a88444"/><stop offset="0.8513" stop-color="#665230"/></linearGradient>
<linearGradient id="r49"><stop offset="0.1365" stop-color="#604e2e"/><stop offset="0.1675" stop-color="#8e703c"/><stop offset="0.2070" stop-color="#c09044"/><stop offset="0.2492" stop-color="#e0a444"/><stop offset="0.2700" stop-color="#fccc4e"/><stop offset="0.2774" stop-color="#ffd656"/><stop offset="0.2792" stop-color="#ffdc5a"/><stop offset="0.2814" stop-color="#ffd856"/><stop offset="0.2831" stop-color="#ffe870"/><stop offset="0.2847" stop-color="#ffed7a"/><stop offset="0.2859" stop-color="#ffed7a"/><stop offset="0.2930" stop-color="#ffed7a"/><stop offset="0.3016" stop-color="#ffec70"/><stop offset="0.3145" stop-color="#ffde5c"/><stop offset="0.3331" stop-color="#fcca4c"/><stop offset="0.3467" stop-color="#f0b244"/><stop offset="0.3540" stop-color="#eeae42"/><stop offset="0.3609" stop-color="#ffd656"/><stop offset="0.3717" stop-color="#ffdc5c"/><stop offset="0.3915" stop-color="#ffe060"/><stop offset="0.4313" stop-color="#ffe260"/><stop offset="0.5000" stop-color="#ffe464"/><stop offset="0.6416" stop-color="#ffe464"/><stop offset="0.6757" stop-color="#ffe060"/><stop offset="0.6956" stop-color="#ffdc5c"/><stop offset="0.7064" stop-color="#ffd656"/><stop offset="0.7132" stop-color="#e8a840"/><stop offset="0.7178" stop-color="#eaac42"/><stop offset="0.7337" stop-color="#f2ba46"/><stop offset="0.7451" stop-color="#fccb4d"/><stop offset="0.7554" stop-color="#fedd62"/><stop offset="0.7667" stop-color="#fee36d"/><stop offset="0.7782" stop-color="#fcdb61"/><stop offset="0.7912" stop-color="#f8c74c"/><stop offset="0.8059" stop-color="#f6bc44"/><stop offset="0.8206" stop-color="#d8a046"/><stop offset="0.8353" stop-color="#a88444"/><stop offset="0.8483" stop-color="#665230"/></linearGradient>
<linearGradient id="r50"><stop offset="0.1392" stop-color="#604e2e"/><stop offset="0.1703" stop-color="#8e703c"/><stop offset="0.2098" stop-color="#c09044"/><stop offset="0.2522" stop-color="#e0a444"/><stop offset="0.2730" stop-color="#fccc4e"/><stop offset="0.2804" stop-color="#ffd656"/><stop offset="0.2823" stop-color="#ffdc5a"/><stop offset="0.2845" stop-color="#ffd856"/><stop offset="0.2862" stop-color="#ffe870"/><stop offset="0.2878" stop-color="#ffec77"/><stop offset="0.2890" stop-color="#ffec77"/><stop offset="0.2955" stop-color="#ffec77"/><stop offset="0.3034" stop-color="#ffec70"/><stop offset="0.3152" stop-color="#ffde5c"/><stop offset="0.3323" stop-color="#fcca4c"/><stop offset="0.3447" stop-color="#f0b244"/><stop offset="0.3511" stop-color="#eeae42"/><stop offset="0.3580" stop-color="#ffd656"/><stop offset="0.3688" stop-color="#ffdc5c"/><stop offset="0.3886" stop-color="#ffe060"/><stop offset="0.4284" stop-color="#ffe260"/><stop offset="0.5000" stop-color="#ffe464"/><stop offset="0.6436" stop-color="#ffe464"/><stop offset="0.6776" stop-color="#ffe060"/><stop offset="0.6975" stop-color="#ffdc5c"/><stop offset="0.7083" stop-color="#ffd656"/><stop offset="0.7151" stop-color="#e8a840"/><stop offset="0.7188" stop-color="#eaac42"/><stop offset="0.7330" stop-color="#f2ba46"/><stop offset="0.7431" stop-color="#fbcb4d"/><stop offset="0.7522" stop-color="#fddc61"/><stop offset="0.7623" stop-color="#fde26b"/><stop offset="0.7739" stop-color="#fbda5f"/><stop offset="0.7872" stop-color="#f7c64c"/><stop offset="0.8021" stop-color="#f6bc44"/><stop offset="0.8171" stop-color="#d8a046"/><stop offset="0.8320" stop-color="#a88444"/><stop offset="0.8453" stop-color="#665230"/></linearGradient>
<linearGradient id="r51"><stop offset="0.1418" stop-color="#604e2e"/><stop offset="0.1730" stop-color="#8e703c"/><stop offset="0.2127" stop-color="#c09044"/><stop offset="0.2552" stop-color="#e0a444"/><stop offset="0.2762" stop-color="#fccc4e"/><stop offset="0.2835" stop-color="#ffd656"/><stop offset="0.2854" stop-color="#ffdc5a"/><stop offset="0.2876" stop-color="#ffd856"/><stop offset="0.2893" stop-color="#ffe870"/><stop offset="0.2909" stop-color="#ffea74"/><stop offset="0.2921" stop-color="#ffea74"/><stop offset="0.2980" stop-color="#ffea74"/><stop offset="0.3052" stop-color="#ffec70"/><stop offset="0.3159" stop-color="#ffde5c"/><stop offset="0.3314" stop-color="#fcca4c"/><stop offset="0.3427" stop-color="#f0b244"/><stop offset="0.3483" stop-color="#eeae42"/><stop offset="0.3551" stop-color="#ffd656"/><stop offset="0.3659" stop-color="#ffdc5c"/><stop offset="0.3858" stop-color="#ffe060"/><stop offset="0.4255" stop-color="#ffe260"/><stop offset="0.5000" stop-color="#ffe464"/><stop offset="0.6455" stop-color="#ffe464"/><stop offset="0.6796" stop-color="#ffe060"/><stop offset="0.6995" stop-color="#ffdc5c"/><stop offset="0.7103" stop-color="#ffd656"/><stop offset="0.7171" stop-color="#e8a840"/><stop offset="0.7199" stop-color="#eaac42"/><stop offset="0.7323" stop-color="#f2ba46"/><stop offset="0.7412" stop-color="#fbca4c"/><stop offset="0.7492" stop-color="#fdda5f"/><stop offset="0.7581" stop-color="#fde069"/><stop offset="0.7699" stop-color="#fbd85e"/><stop offset="0.7834" stop-color="#f6c54b"/><stop offset="0.7985" stop-color="#f6bc44"/><stop offset="0.8137" stop-color="#d8a046"/><stop offset="0.8288" stop-color="#a88444"/><stop offset="0.8423" stop-color="#665230"/></linearGradient>
<linearGradient id="r52"><stop offset="0.1445" stop-color="#604e2e"/><stop offset="0.1758" stop-color="#8e703c"/><stop offset="0.2156" stop-color="#c09044"/><stop offset="0.2582" stop-color="#e0a444"/><stop offset="0.2793" stop-color="#fccc4e"/><stop offset="0.2866" stop-color="#ffd656"/><stop offset="0.2885" stop-color="#ffdc5a"/><stop offset="0.2907" stop-color="#ffd856"/><stop offset="0.2924" stop-color="#ffe870"/><stop offset="0.2940" stop-color="#ffe971"/><stop offset="0.2952" stop-color="#ffe971"/><stop offset="0.3005" stop-color="#ffe971"/><stop offset="0.3070" stop-color="#ffec70"/><stop offset="0.3166" stop-color="#ffde5c"/><stop offset="0.3306" stop-color="#fcca4c"/><stop offset="0.3407" stop-color="#f0b244"/><stop offset="0.3454" stop-color="#eeae42"/><stop offset="0.3522" stop-color="#ffd656"/><stop offset="0.3630" stop-color="#ffdc5c"/><stop offset="0.3829" stop-color="#ffe060"/><stop offset="0.4226" stop-color="#ffe260"/><stop offset="0.5000" stop-color="#ffe464"/><stop offset="0.6474" stop-color="#ffe464"/><stop offset="0.6815" stop-color="#ffe060"/><stop offset="0.7014" stop-color="#ffdc5c"/><stop offset="0.7122" stop-color="#ffd656"/><stop offset="0.7190" stop-color="#e8a840"/><stop offset="0.7212" stop-color="#eaac42"/><stop offset="0.7324" stop-color="#f2ba46"/><stop offset="0.7404" stop-color="#fbca4c"/><stop offset="0.7475" stop-color="#fdd95d"/><stop offset="0.7555" stop-color="#fdde66"/><stop offset="0.7673" stop-color="#fbd65c"/><stop offset="0.7807" stop-color="#f6c34a"/><stop offset="0.7958" stop-color="#f6bc44"/><stop offset="0.8108" stop-color="#d8a046"/><stop offset="0.8259" stop-color="#a88444"/><stop offset="0.8393" stop-color="#665230"/></linearGradient>
<linearGradient id="r53"><stop offset="0.1471" stop-color="#604e2e"/><stop offset="0.1785" stop-color="#8e703c"/><stop offset="0.2184" stop-color="#c09044"/><stop offset="0.2612" stop-color="#e0a444"/><stop offset="0.2824" stop-color="#fccc4e"/><stop offset="0.2898" stop-color="#ffd656"/><stop offset="0.2916" stop-color="#ffdc5a"/><stop offset="0.2938" stop-color="#ffd856"/><stop offset="0.2956" stop-color="#ffe870"/><stop offset="0.2971" stop-color="#ffe76e"/><stop offset="0.2983" stop-color="#ffe76e"/><stop offset="0.3026" stop-color="#ffe76e"/><stop offset="0.3078" stop-color="#ffec70"/><stop offset="0.3156" stop-color="#ffde5c"/><stop offset="0.3268" stop-color="#fcca4c"/><stop offset="0.3350" stop-color="#f0b244"/><stop offset="0.3381" stop-color="#eeae42"/><stop offset="0.3449" stop-color="#ffd656"/><stop offset="0.3557" stop-color="#ffdc5c"/><stop offset="0.3756" stop-color="#ffe060"/><stop offset="0.4153" stop-color="#ffe260"/><stop offset="0.5000" stop-color="#ffe464"/><stop offset="0.6513" stop-color="#ffe464"/><stop offset="0.6854" stop-color="#ffe060"/><stop offset="0.7053" stop-color="#ffdc5c"/><stop offset="0.7161" stop-color="#ffd656"/><stop offset="0.7229" stop-color="#e8a840"/><stop offset="0.7242" stop-color="#eaac42"/><stop offset="0.7335" stop-color="#f2ba46"/><stop offset="0.7402" stop-color="#fac94c"/><stop offset="0.7463" stop-color="#fdd85c"/><stop offset="0.7530" stop-color="#fddc64"/><stop offset="0.7646" stop-color="#fad45a"/><stop offset="0.7780" stop-color="#f5c24a"/><stop offset="0.7930" stop-color="#f6bc44"/><stop offset="0.8080" stop-color="#d8a046"/><stop offset="0.8230" stop-color="#a88444"/><stop offset="0.8363" stop-color="#665230"/></linearGradient>
<linearGradient id="r54"><stop offset="0.1498" stop-color="#604e2e"/><stop offset="0.1813" stop-color="#8e703c"/><stop offset="0.2213" stop-color="#c09044"/><stop offset="0.2642" stop-color="#e0a444"/><stop offset="0.2855" stop-color="#fccc4e"/><stop offset="0.2929" stop-color="#ffd656"/><stop offset="0.2947" stop-color="#ffdc5a"/><stop offset="0.2970" stop-color="#ffd856"/><stop offset="0.2987" stop-color="#ffe870"/><stop offset="0.3002" stop-color="#ffe56b"/><stop offset="0.3014" stop-color="#ffe56b"/><stop offset="0.3046" stop-color="#ffe56b"/><stop offset="0.3084" stop-color="#ffec70"/><stop offset="0.3142" stop-color="#ffde5c"/><stop offset="0.3224" stop-color="#fcca4c"/><stop offset="0.3285" stop-color="#f0b244"/><stop offset="0.3299" stop-color="#eeae42"/><stop offset="0.3367" stop-color="#ffd656"/><stop offset="0.3475" stop-color="#ffdc5c"/><stop offset="0.3674" stop-color="#ffe060"/><stop offset="0.4072" stop-color="#ffe260"/><stop offset="0.5000" stop-color="#ffe464"/><stop offset="0.6555" stop-color="#ffe464"/><stop offset="0.6896" stop-color="#ffe060"/><stop offset="0.7095" stop-color="#ffdc5c"/><stop offset="0.7203" stop-color="#ffd656"/><stop offset="0.7271" stop-color="#e8a840"/><stop offset="0.7275" stop-color="#eaac42"/><stop offset="0.7349" stop-color="#f2ba46"/><stop offset="0.7403" stop-color="#fac84b"/><stop offset="0.7451" stop-color="#fdd65a"/><stop offset="0.7504" stop-color="#fddb62"/><stop offset="0.7620" stop-color="#fad358"/><stop offset="0.7753" stop-color="#f5c149"/><stop offset="0.7902" stop-color="#f6bc44"/><stop offset="0.8051" stop-color="#d8a046"/><stop offset="0.8201" stop-color="#a88444"/><stop offset="0.8333" stop-color="#665230"/></linearGradient>
<linearGradient id="r55"><stop offset="0.1524" stop-color="#604e2e"/><stop offset="0.1840" stop-color="#8e703c"/><stop offset="0.2242" stop-color="#c09044"/><stop offset="0.2673" stop-color="#e0a444"/><stop offset="0.2886" stop-color="#fccc4e"/><stop offset="0.2960" stop-color="#ffd656"/><stop offset="0.2979" stop-color="#ffdc5a"/><stop offset="0.3001" stop-color="#ffd856"/><stop offset="0.3018" stop-color="#ffe870"/><stop offset="0.3033" stop-color="#ffe468"/><stop offset="0.3045" stop-color="#ffe468"/><stop offset="0.3066" stop-color="#ffe468"/><stop offset="0.3090" stop-color="#ffec70"/><stop offset="0.3128" stop-color="#ffde5c"/><stop offset="0.3181" stop-color="#fcca4c"/><stop offset="0.3220" stop-color="#f0b244"/><stop offset="0.3217" stop-color="#eeae42"/><stop offset="0.3285" stop-color="#ffd656"/><stop offset="0.3393" stop-color="#ffdc5c"/><stop offset="0.3592" stop-color="#ffe060"/><stop offset="0.3990" stop-color="#ffe260"/><stop offset="0.5000" stop-color="#ffe464"/><stop offset="0.6596" stop-color="#ffe464"/><stop offset="0.6937" stop-color="#ffe060"/><stop offset="0.7136" stop-color="#ffdc5c"/><stop offset="0.7244" stop-color="#ffd656"/><stop offset="0.7312" stop-color="#e8a840"/><stop offset="0.7306" stop-color="#eaac42"/><stop offset="0.7362" stop-color="#f2ba46"/><stop offset="0.7402" stop-color="#fac84b"/><stop offset="0.7439" stop-color="#fdd558"/><stop offset="0.7479" stop-color="#fdd95f"/><stop offset="0.7594" stop-color="#fad156"/><stop offset="0.7726" stop-color="#f4c048"/><stop offset="0.7874" stop-color="#f6bc44"/><stop offset="0.8023" stop-color="#d8a046"/><stop offset="0.8171" stop-color="#a88444"/><stop offset="0.8303" stop-color="#665230"/></linearGradient>
<linearGradient id="r56"><stop offset="0.1551" stop-color="#604e2e"/><stop offset="0.1868" stop-color="#8e703c"/><stop offset="0.2271" stop-color="#c09044"/><stop offset="0.2704" stop-color="#e0a444"/><stop offset="0.2918" stop-color="#fccc4e"/><stop offset="0.2992" stop-color="#ffd656"/><stop offset="0.3011" stop-color="#ffdc5a"/><stop offset="0.3033" stop-color="#ffd856"/><stop offset="0.3050" stop-color="#ffe870"/><stop offset="0.3065" stop-color="#ffe468"/><stop offset="0.3077" stop-color="#ffe468"/><stop offset="0.3090" stop-color="#ffe468"/><stop offset="0.3105" stop-color="#ffec70"/><stop offset="0.3127" stop-color="#ffde5c"/><stop offset="0.3160" stop-color="#fcca4c"/><stop offset="0.3184" stop-color="#f0b244"/><stop offset="0.3169" stop-color="#eeae42"/><stop offset="0.3237" stop-color="#ffd656"/><stop offset="0.3345" stop-color="#ffdc5c"/><stop offset="0.3544" stop-color="#ffe060"/><stop offset="0.3942" stop-color="#ffe260"/><stop offset="0.5000" stop-color="#ffe464"/><stop offset="0.6628" stop-color="#ffe464"/><stop offset="0.6969" stop-color="#ffe060"/><stop offset="0.7168" stop-color="#ffdc5c"/><stop offset="0.7276" stop-color="#ffd656"/><stop offset="0.7344" stop-color="#e8a840"/><stop offset="0.7330" stop-color="#eaac42"/><stop offset="0.7370" stop-color="#f2ba46"/><stop offset="0.7399" stop-color="#fac74a"/><stop offset="0.7425" stop-color="#fdd357"/><stop offset="0.7453" stop-color="#fdd75d"/><stop offset="0.7568" stop-color="#facf54"/><stop offset="0.7699" stop-color="#f4be48"/><stop offset="0.7847" stop-color="#f6bc44"/><stop offset="0.7994" stop-color="#d8a046"/><stop offset="0.8142" stop-color="#a88444"/><stop offset="0.8273" stop-color="#665230"/></linearGradient>
<linearGradient id="r57"><stop offset="0.1577" stop-color="#604e2e"/><stop offset="0.1895" stop-color="#8e703c"/><stop offset="0.2301" stop-color="#c09044"/><stop offset="0.2734" stop-color="#e0a444"/><stop offset="0.2950" stop-color="#fccc4e"/><stop offset="0.3024" stop-color="#ffd656"/><stop offset="0.3043" stop-color="#ffdc5a"/><stop offset="0.3065" stop-color="#ffd856"/><stop offset="0.3082" stop-color="#ffe870"/><stop offset="0.3097" stop-color="#ffe468"/><stop offset="0.3109" stop-color="#ffe468"/><stop offset="0.3117" stop-color="#ffe468"/><stop offset="0.3127" stop-color="#ffec70"/><stop offset="0.3141" stop-color="#ffde5c"/><stop offset="0.3162" stop-color="#fcca4c"/><stop offset="0.3177" stop-color="#f0b244"/><stop offset="0.3155" stop-color="#eeae42"/><stop offset="0.3223" stop-color="#ffd656"/><stop offset="0.3331" stop-color="#ffdc5c"/><stop offset="0.3530" stop-color="#ffe060"/><stop offset="0.3928" stop-color="#ffe260"/><stop offset="0.5000" stop-color="#ffe464"/><stop offset="0.6660" stop-color="#ffe464"/><stop offset="0.7001" stop-color="#ffe060"/><stop offset="0.7200" stop-color="#ffdc5c"/><stop offset="0.7308" stop-color="#ffd656"/><stop offset="0.7376" stop-color="#e8a840"/><stop offset="0.7354" stop-color="#eaac42"/><stop offset="0.7378" stop-color="#f2ba46"/><stop offset="0.7395" stop-color="#f9c74a"/><stop offset="0.7410" stop-color="#fdd255"/><stop offset="0.7428" stop-color="#fdd55b"/><stop offset="0.7542" stop-color="#f9cd52"/><stop offset="0.7672" stop-color="#f3bd47"/><stop offset="0.7819" stop-color="#f6bc44"/><stop offset="0.7966" stop-color="#d8a046"/><stop offset="0.8113" stop-color="#a88444"/><stop offset="0.8243" stop-color="#665230"/></linearGradient>
<linearGradient id="gtop" gradientUnits="userSpaceOnUse" x1="0" y1="416" x2="0" y2="430">
<stop offset="0" stop-color="#8a6c3a" stop-opacity="1"/><stop offset="0.2" stop-color="#c49848" stop-opacity="0.85"/><stop offset="0.6" stop-color="#eeb044" stop-opacity="0.4"/><stop offset="1" stop-color="#f8c044" stop-opacity="0"/>
</linearGradient>
<filter id="b1" x="-50%" y="-50%" width="200%" height="200%"><feGaussianBlur stdDeviation="1.2"/></filter>
<filter id="b3" x="-50%" y="-50%" width="200%" height="200%"><feGaussianBlur stdDeviation="0.7"/></filter>
<filter id="bv" x="-5%" y="-5%" width="110%" height="110%"><feGaussianBlur stdDeviation="0 1.3"/></filter>
</defs>
<ellipse cx="466" cy="578.3" rx="85" ry="5.6" fill="#606060"/>
<path d="M412 580Q466 588.6 519 579.2" stroke="#15256a" stroke-width="1" fill="none" opacity="0.85"/>
<g clip-path="url(#bodyclip)">
<g filter="url(#bv)"><rect x="378" y="416" width="176" height="3.5" fill="url(#r0)"/>
<rect x="378" y="419" width="176" height="3.5" fill="url(#r1)"/>
<rect x="378" y="422" width="176" height="3.5" fill="url(#r2)"/>
<rect x="378" y="425" width="176" height="3.5" fill="url(#r3)"/>
<rect x="378" y="428" width="176" height="3.5" fill="url(#r4)"/>
<rect x="378" y="431" width="176" height="3.5" fill="url(#r5)"/>
<rect x="378" y="434" width="176" height="3.5" fill="url(#r6)"/>
<rect x="378" y="437" width="176" height="3.5" fill="url(#r7)"/>
<rect x="378" y="440" width="176" height="3.5" fill="url(#r8)"/>
<rect x="378" y="443" width="176" height="3.5" fill="url(#r9)"/>
<rect x="378" y="446" width="176" height="3.5" fill="url(#r10)"/>
<rect x="378" y="449" width="176" height="3.5" fill="url(#r11)"/>
<rect x="378" y="452" width="176" height="3.5" fill="url(#r12)"/>
<rect x="378" y="455" width="176" height="3.5" fill="url(#r13)"/>
<rect x="378" y="458" width="176" height="3.5" fill="url(#r14)"/>
<rect x="378" y="461" width="176" height="3.5" fill="url(#r15)"/>
<rect x="378" y="464" width="176" height="3.5" fill="url(#r16)"/>
<rect x="378" y="467" width="176" height="3.5" fill="url(#r17)"/>
<rect x="378" y="470" width="176" height="3.5" fill="url(#r18)"/>
<rect x="378" y="473" width="176" height="3.5" fill="url(#r19)"/>
<rect x="378" y="476" width="176" height="3.5" fill="url(#r20)"/>
<rect x="378" y="479" width="176" height="3.5" fill="url(#r21)"/>
<rect x="378" y="482" width="176" height="3.5" fill="url(#r22)"/>
<rect x="378" y="485" width="176" height="3.5" fill="url(#r23)"/>
<rect x="378" y="488" width="176" height="3.5" fill="url(#r24)"/>
<rect x="378" y="491" width="176" height="3.5" fill="url(#r25)"/>
<rect x="378" y="494" width="176" height="3.5" fill="url(#r26)"/>
<rect x="378" y="497" width="176" height="3.5" fill="url(#r27)"/>
<rect x="378" y="500" width="176" height="3.5" fill="url(#r28)"/>
<rect x="378" y="503" width="176" height="3.5" fill="url(#r29)"/>
<rect x="378" y="506" width="176" height="3.5" fill="url(#r30)"/>
<rect x="378" y="509" width="176" height="3.5" fill="url(#r31)"/>
<rect x="378" y="512" width="176" height="3.5" fill="url(#r32)"/>
<rect x="378" y="515" width="176" height="3.5" fill="url(#r33)"/>
<rect x="378" y="518" width="176" height="3.5" fill="url(#r34)"/>
<rect x="378" y="521" width="176" height="3.5" fill="url(#r35)"/>
<rect x="378" y="524" width="176" height="3.5" fill="url(#r36)"/>
<rect x="378" y="527" width="176" height="3.5" fill="url(#r37)"/>
<rect x="378" y="530" width="176" height="3.5" fill="url(#r38)"/>
<rect x="378" y="533" width="176" height="3.5" fill="url(#r39)"/>
<rect x="378" y="536" width="176" height="3.5" fill="url(#r40)"/>
<rect x="378" y="539" width="176" height="3.5" fill="url(#r41)"/>
<rect x="378" y="542" width="176" height="3.5" fill="url(#r42)"/>
<rect x="378" y="545" width="176" height="3.5" fill="url(#r43)"/>
<rect x="378" y="548" width="176" height="3.5" fill="url(#r44)"/>
<rect x="378" y="551" width="176" height="3.5" fill="url(#r45)"/>
<rect x="378" y="554" width="176" height="3.5" fill="url(#r46)"/>
<rect x="378" y="557" width="176" height="3.5" fill="url(#r47)"/>
<rect x="378" y="560" width="176" height="3.5" fill="url(#r48)"/>
<rect x="378" y="563" width="176" height="3.5" fill="url(#r49)"/>
<rect x="378" y="566" width="176" height="3.5" fill="url(#r50)"/>
<rect x="378" y="569" width="176" height="3.5" fill="url(#r51)"/>
<rect x="378" y="572" width="176" height="3.5" fill="url(#r52)"/>
<rect x="378" y="575" width="176" height="3.5" fill="url(#r53)"/>
<rect x="378" y="578" width="176" height="3.5" fill="url(#r54)"/>
<rect x="378" y="581" width="176" height="3.5" fill="url(#r55)"/>
<rect x="378" y="584" width="176" height="3.5" fill="url(#r56)"/>
<rect x="378" y="587" width="176" height="3.5" fill="url(#r57)"/></g>
<rect x="375" y="410" width="185" height="22" fill="url(#gtop)"/>
<path d="M445.5 415.5L449.6 430L450.6 424Q451.5 418.5 456 415.5Z" fill="#8a6e3c" filter="url(#b3)"/>
<path d="M503.5 415.5L499.8 430L499 424Q498 418.5 493.5 415.5Z" fill="#8a6e3c" filter="url(#b3)"/>
<rect x="460" y="427" width="30" height="2.6" fill="#ffffa0" filter="url(#b1)" opacity="0.9"/>
<circle cx="402" cy="428" r="2.2" fill="#ffffa0" filter="url(#b1)"/>
<circle cx="526" cy="428" r="2.2" fill="#ffffa0" filter="url(#b1)" opacity="0.8"/>
</g>
<defs>
<linearGradient id="capf" gradientUnits="userSpaceOnUse" x1="543.4" y1="0" x2="618.7" y2="0">
<stop offset="0" stop-color="#a88240"/><stop offset="0.07" stop-color="#d8a044"/><stop offset="0.28" stop-color="#f4bc46"/><stop offset="0.39" stop-color="#ffe060"/>
<stop offset="0.44" stop-color="#ffff94"/><stop offset="0.53" stop-color="#ffff94"/><stop offset="0.59" stop-color="#ffe868"/><stop offset="0.71" stop-color="#ffd050"/><stop offset="0.88" stop-color="#f0b040"/><stop offset="0.96" stop-color="#cc9a42"/><stop offset="1" stop-color="#a88240"/>
</linearGradient>
<linearGradient id="capc" gradientUnits="userSpaceOnUse" x1="550.4" y1="0" x2="611.7" y2="0">
<stop offset="0" stop-color="#a07c3e"/><stop offset="0.025" stop-color="#e4a642"/><stop offset="0.12" stop-color="#f8c048"/><stop offset="0.235" stop-color="#eeae40"/>
<stop offset="0.245" stop-color="#ffc848"/><stop offset="0.37" stop-color="#ffe060"/><stop offset="0.42" stop-color="#ffff98"/><stop offset="0.54" stop-color="#ffff98"/><stop offset="0.59" stop-color="#fff078"/><stop offset="0.65" stop-color="#ffdc58"/>
<stop offset="0.755" stop-color="#ffd050"/><stop offset="0.765" stop-color="#ffc040"/><stop offset="0.905" stop-color="#f8b840"/><stop offset="0.915" stop-color="#ffd850"/><stop offset="1" stop-color="#ffd850"/>
</linearGradient></defs>
<ellipse cx="580.2" cy="563.4" rx="35" ry="7.1" fill="#ff0a0a"/>
<path d="M542.6 565.5L547 565.5L547 568.2Z" fill="#707070"/><path d="M615 568L619.5 565.3L619.5 568Z" fill="#808080"/>
<path d="M550.4 541L556 541L556 540.2L586 540.2L588 540.6L588 544L597 544L597 541.5L606.4 541.5L606.4 542.5L611.7 542.5L611.7 560L550.4 560Z" fill="url(#capc)"/>
<path d="M543.4 555.8L550.4 555.8L550.4 557L555 558.6L606.4 558.6L611.7 557L611.7 555.8L618.7 555.8L618.7 562Q618.5 566 604 567.5Q581 569.6 558 567.5Q543.6 566 543.4 562Z" fill="url(#capf)"/>
<rect x="543.4" y="555.6" width="7" height="1.3" fill="#c09444"/><rect x="611.7" y="555.6" width="7" height="1.3" fill="#c09444"/>
<rect x="586" y="540.4" width="2" height="3.6" fill="#d8a448"/>
<rect x="559.5" y="543" width="5.5" height="1" fill="#a8843e"/><rect x="564.3" y="543" width="1" height="15.5" fill="#b08840"/>
<rect x="555.3" y="557.8" width="10" height="1" fill="#a07c3e"/>
<rect x="565.2" y="555" width="8" height="3.6" fill="#866c3c"/><rect x="572.4" y="553.6" width="1" height="5" fill="#866c3c"/>
<rect x="599" y="543" width="6.4" height="1" fill="#b08840"/>
<rect x="597" y="557.6" width="9.6" height="1.1" fill="#866c3c"/>
<rect x="606" y="542.5" width="0.8" height="15" fill="#e0a444"/>
<polygon points="735.5,629 840,635 840,640.8 735.5,634" fill="#28a04a"/>
<polygon points="840,632.6 873,624.1 873,629.8 845,640 840,640" fill="#d81c26"/>
<rect x="836" y="528" width="7" height="110" fill="#196ef0"/>
</svg>

<div id="topbar"></div>
<div id="topright"></div>
<div class="vdiv" style="left:22px"></div>
<div class="vdiv" style="left:860px"></div>
<svg class="abs" style="left:0;top:0" width="1078" height="41" viewBox="0 0 1078 41">
 <path d="M-1 12.3L3.6 16.6L8.2 12.3" stroke="#5a5a5a" stroke-width="1.1" fill="none"/>
 <path d="M836.8 12.2L841.4 16.8L846 12.2" stroke="#5a5a5a" stroke-width="1.1" fill="none"/>
 <circle cx="51" cy="15" r="11.75" fill="#fff" stroke="#191919" stroke-width="2.5"/>
 <path d="M39.1 15V27" stroke="#191919" stroke-width="2.2" fill="none"/>
 <circle cx="51" cy="15" r="9" fill="none" stroke="#f0a01e" stroke-width="3.2"/>
 <g stroke="#0d0d45" stroke-width="2.1" fill="none" stroke-linecap="round">
  <path d="M877 7.3H888M894 7.3H901"/><circle cx="891" cy="7.3" r="2.1" fill="#f0f0f0"/>
  <path d="M877 14.8H892.4M900.8 14.8H901.2"/><circle cx="895.4" cy="14.8" r="2.1" fill="#f0f0f0"/>
  <path d="M877 22.3H881.7M887.7 22.3H901"/><circle cx="884.7" cy="22.3" r="2.1" fill="#f0f0f0"/>
 </g>
</svg>
<div class="abs" style="left:47.5px;top:9.8px;font-size:10.5px;font-weight:bold;width:7px;text-align:center">1</div>
<div class="abs" id="t1" style="transform-origin:0 0;transform:scaleX(1.05);left:80px;top:4px;font-size:10.2px;">Generic PETG</div>
<div class="abs" id="t2" style="transform-origin:0 0;transform:scaleX(1.1);left:80px;top:18.7px;font-size:10.2px;font-weight:bold;">0.4mm Nozzle</div>
<div class="abs" id="t3" style="transform-origin:0 0;transform:scaleX(1.04);left:910.7px;top:9.5px;font-size:12px;"><span style="letter-spacing:-0.14px">PETG #2 - Stan...</span><span style="letter-spacing:0.3px">uality - 0.2mm</span></div>

<div id="panel"></div>
<div id="strip"></div>
<div class="abs" style="left:861px;top:87px;width:217px;height:1px;background:#c4c4c4"></div>
<div class="abs" id="t4" style="transform-origin:0 0;transform:scaleX(1.135);left:872.8px;top:62.7px;font-size:12px;">Параметры печати</div>
<div class="abs" id="t5" style="transform-origin:0 0;transform:scaleX(1.067);left:874.3px;top:109.5px;font-size:12.6px;">Профиль</div>
<div class="abs" style="left:978px;top:102px;width:100px;height:26px;background:#f0f0f0;border-bottom:1px solid #b4b4b4"></div>
<div class="abs" id="t6" style="transform-origin:0 0;transform:scaleX(1.0);left:991px;top:110.7px;font-size:10.5px;">PETG #2<span style="color:#c8c8c8;letter-spacing:0.45px"> - Standard Quality</span></div>
<div class="abs" style="left:887px;top:141px;width:191px;height:25px;background:#f0f0f0;border-bottom:1px solid #a8a8a8"></div>
<svg class="abs" style="left:900px;top:143px" width="22" height="22" viewBox="0 0 22 22"><circle cx="12.6" cy="8.6" r="5" fill="none" stroke="#191919" stroke-width="1.5"/><path d="M9.2 12.2L2.4 18.6" stroke="#191919" stroke-width="1.6" fill="none"/></svg>
<div class="abs" id="t7" style="transform-origin:0 0;transform:scaleX(1.03);left:933px;top:150.5px;font-size:10.5px;font-style:italic;color:#c0c0c0;">Параметры поиска</div>
<div class="abs" style="left:887px;top:186px;width:191px;height:1px;background:#d2d2d2"></div>
<svg class="abs" style="left:895px;top:193px" width="17" height="17" viewBox="0 0 17 17"><rect x="0.4" y="1.1" width="4.2" height="1.5" fill="#191919"/><rect x="0.4" y="5.3" width="9.2" height="3.2" fill="#191919"/><rect x="0.4" y="11.4" width="15.2" height="5" fill="#191919"/></svg>
<div class="abs" id="t8" style="transform-origin:0 0;transform:scaleX(1.077);left:919px;top:197px;font-size:12.6px;font-weight:bold;">Качество</div>
<div class="row" id="r1" style="transform-origin:0 0;transform:scaleX(1.067);left:896.5px;top:228.5px;">Высота слоя</div>
<div class="row" id="r2" style="transform-origin:0 0;transform:scaleX(1.0);left:896.5px;top:260.5px;font-style:italic">Высота первого слоя</div>
<div class="row" id="r3" style="transform-origin:0 0;transform:scaleX(1.14);left:896.5px;top:292.5px;">Ширина линии</div>
<div class="row" id="r4" style="transform-origin:0 0;transform:scaleX(1.134);left:909.4px;top:324.5px;">Ширина линии стенки</div>
<div class="row" id="r5" style="transform-origin:0 0;transform:scaleX(1.134);left:922.2px;top:356.5px;">Ширина линии внешней стенки</div>
<div class="row" id="r6" style="transform-origin:0 0;transform:scaleX(1.134);left:922.2px;top:388.5px;">Ширина линии внутренней стенки</div>
<div class="row" id="r7" style="transform-origin:0 0;transform:scaleX(1.16);left:909.4px;top:420.5px;">Ширина линии дна/крышки</div>
<div class="row" id="r8" style="transform-origin:0 0;transform:scaleX(1.132);left:909.4px;top:452.5px;">Ширина линии заполнения</div>
<div class="abs" style="left:861px;top:478px;width:217px;height:10px;overflow:hidden"><div class="row" id="r9" style="transform-origin:0 0;transform:scaleX(1.14);left:48.4px;top:6.5px;">Ширина линии юбки/каймы</div></div>
<div class="abs" style="left:861px;top:488px;width:217px;height:1px;background:#c4c4c4"></div>
<div class="abs" style="left:874px;top:502px;width:145px;height:32px;box-sizing:border-box;border:1px solid #196ef0;background:#fff"></div>
<svg class="abs" style="left:890px;top:510px" width="14" height="17" viewBox="0 0 14 17"><path d="M10.4 2.2L3.6 8.5L10.4 14.8" stroke="#196ef0" stroke-width="1.6" fill="none"/></svg>
<div class="abs" id="t9" style="transform-origin:0 0;transform:scaleX(1.09);left:913.2px;top:512.5px;font-size:12.6px;color:#196ef0;">Рекомендован</div>

<div class="abs" style="left:1046px;top:839px;width:40px;height:70px;background:#fff;border:1px solid #bdbdbd;border-radius:3px 0 0 0;box-sizing:border-box"></div>
<div class="abs" style="left:1068px;top:858px;width:10px;height:32px;background:#196ef0"></div>
</body></html>
